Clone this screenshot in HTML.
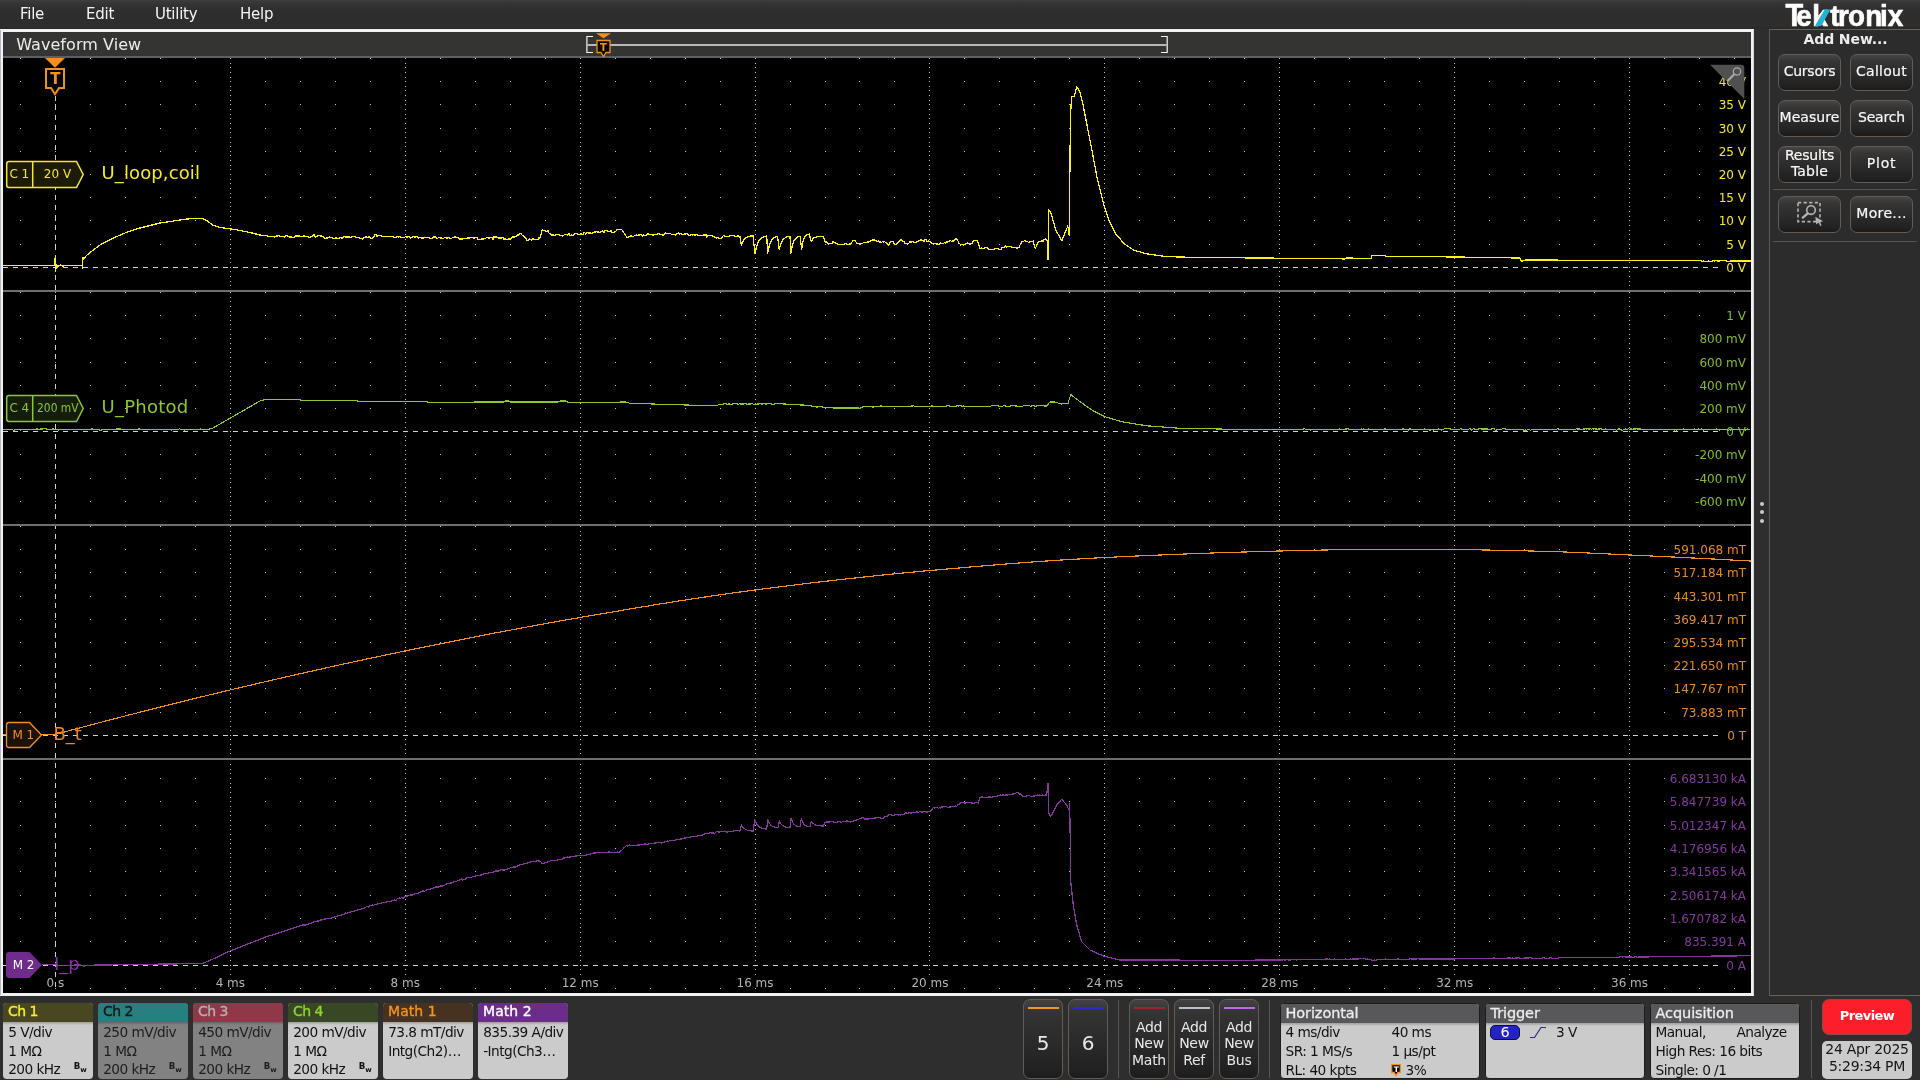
<!DOCTYPE html><html lang="en"><head><meta charset="utf-8"><title>Tektronix Waveform View</title>
<style>
*{box-sizing:border-box;margin:0;padding:0}
html,body{width:1920px;height:1080px;overflow:hidden;background:#2e2e2e}
body{position:relative;font-family:"DejaVu Sans", "Liberation Sans", sans-serif;color:#f2f2f2;font-size:14px}
.abs{position:absolute}
#root{position:absolute;left:0;top:0;width:1920px;height:1080px;will-change:transform}
.menu span{position:absolute;top:4px;font-size:15px;line-height:20px;letter-spacing:-.25px;color:#f4f4f4;white-space:nowrap}
#topbar{left:0;top:0;width:1920px;height:29px;background:linear-gradient(#3e3e3e,#343434 4px,#2e2e2e 11px,#2d2d2d 27px,#272727)}
#win{left:0;top:29px;width:1754px;height:967px;background:#000;border:3px solid #f1f1f1;border-left-color:#f4f4f4}
#wintitle{left:3px;top:32px;width:1748px;height:24px;background:#343433}
#wintitle .t{position:absolute;left:13.2px;top:1.5px;font-size:16px;line-height:22px;letter-spacing:.06px;color:#ececec;white-space:nowrap}
#winline{left:3px;top:56px;width:1748px;height:2px;background:#5c6064}
.sdiv{left:3px;width:1748px;height:2px;background:#6f6f6f}
#plot{left:0;top:0}
#plot text{font-family:"DejaVu Sans", "Liberation Sans", sans-serif;font-size:12px}
/* right panel */
#rp{left:1769px;top:29px;width:160px;height:967px;border:1px solid #6b615b;border-left-color:#5e5d5e;background:#2c2c2c}
#rp h3{position:absolute;left:0;top:-.2px;width:151px;text-align:center;font-size:14px;line-height:18px;font-weight:bold;letter-spacing:-.1px;color:#ececec;white-space:nowrap}
.btn{position:absolute;width:63px;height:36.5px;border:1px solid #655b55;border-radius:7px;
 background:linear-gradient(#454545 0%,#353535 18%,#2b2b2b 55%,#222 86%,#1b1b1b 100%);
 color:#f8f8f8;font-size:14px;-webkit-text-stroke:.2px #f8f8f8;text-align:center;line-height:32.6px;white-space:nowrap}
.btn.two{line-height:15.8px;padding-top:.6px}
.hr{position:absolute;height:1px;background:#5b534e}
/* bottom bar */
.badge{position:absolute;top:1003px;width:90px;height:76px;border-radius:4px;overflow:hidden;background:#cbcbcb;color:#111}
.badge.off{background:#828282;color:#1d1d1d}
.badge .h{height:19px;padding-left:5px;font-size:14px;-webkit-text-stroke:.35px currentColor;line-height:17.8px;letter-spacing:-.5px;white-space:nowrap}
.badge .b{padding:.9px 0 0 5.2px;font-size:13.7px;line-height:18.8px;white-space:nowrap;letter-spacing:-.55px;
 background:linear-gradient(rgba(0,0,0,.22),rgba(0,0,0,0) 3px)}
.badge .b div{height:18.8px}
.bw{position:absolute;right:6.2px;top:58px;font-size:8.6px;font-weight:bold;line-height:10px;letter-spacing:0}
.bw sub{font-size:7px;vertical-align:-2.7px;font-weight:bold}
.tall{position:absolute;top:999px;width:40px;height:80px;border:1px solid #655b55;border-radius:7px;
 background:linear-gradient(#424242 0%,#343434 15%,#2a2a2a 55%,#212121 90%,#1c1c1c 100%);color:#e8e8e8;text-align:center}
.tall i{position:absolute;left:3.5px;top:7.2px;width:31px;height:2px;display:block}
.tall .n{position:absolute;left:0;top:31px;width:38px;font-size:20px;line-height:24px}
.tall .w{position:absolute;left:-2px;top:19px;width:42px;font-size:14px;line-height:16.3px;letter-spacing:-.3px}
.vsep{position:absolute;top:1000px;width:1px;height:78px;background:#565656}
.info{position:absolute;top:1003px;height:76px;border-radius:4px;overflow:hidden;background:#cbcbcb;color:#111;border:1px solid #1c1c1c}
.info .h{height:19px;padding-left:4.5px;font-size:14.5px;-webkit-text-stroke:.3px currentColor;line-height:18.4px;letter-spacing:-.1px;background:#58585a;color:#ececec;white-space:nowrap}
.info .b{position:relative;height:57px;font-size:13.7px;letter-spacing:-.55px;line-height:18.8px;white-space:nowrap;background:linear-gradient(rgba(0,0,0,.22),rgba(0,0,0,0) 3px)}
.info .b span{position:absolute}
#prev{left:1822px;top:999px;width:90px;height:36px;border-radius:7px;background:#fc1e28;border:1px solid #8a4a4a;color:#fff;font-weight:bold;font-size:13px;line-height:32.8px;text-align:center;letter-spacing:-.55px}
#date{left:1822px;top:1040.5px;width:90px;height:38px;border-radius:5px;background:#cbcbcb;color:#151515;font-size:14px;line-height:17px;text-align:center;padding-top:.8px;white-space:nowrap;letter-spacing:-.3px}
</style></head><body><div id="root">
<div id="topbar" class="abs"></div>
<div class="menu"><span style="left:20px">File</span><span style="left:86px">Edit</span><span style="left:155px">Utility</span><span style="left:240px">Help</span></div>
<svg class="abs" style="left:1780px;top:0" width="130" height="29" viewBox="1780 0 130 29"><g transform="translate(1786 0) scale(.92 1)"><text y="25.8" fill="#fff" stroke="#fff" stroke-width=".65" style="font:bold 30.3px Liberation Sans,DejaVu Sans,sans-serif"><tspan x="-0.5" style="font-size:31.5px">T</tspan><tspan x="11.1 28.6 48.1 56.6 67.4 86.2 102.2 110.5">ektronix</tspan></text></g><path d="M1814.9 25.9H1821.3L1830.5 9.6H1824.7Z" fill="#22b4d8"/></svg>
<div id="win" class="abs"></div>
<div class="abs" style="left:0;top:30px;width:1px;height:965px;background:#b6b6be"></div>
<div class="abs" style="left:1753px;top:30px;width:1px;height:965px;background:#d4d4d8"></div>
<div id="wintitle" class="abs"><div class="t">Waveform View</div></div>
<div id="winline" class="abs"></div>
<svg class="abs" style="left:580px;top:32px" width="600" height="26" viewBox="580 32 600 26">
<path d="M587.5 45H1166.5" stroke="#b7b7b7" stroke-width="2" fill="none"/>
<path d="M593 36.5H586.9V52.5H593M1161 36.5H1167.2V52.5H1161" stroke="#f4f4f4" stroke-width="1.2" fill="none"/>
<path d="M596 33.2H611L603.5 38.3Z" fill="#f28f22"/>
<path d="M597 40.5H610V52.5H606L603.5 56.5L601 52.5H597Z" fill="#000" stroke="#f28f22" stroke-width="1.3"/>
<text x="603.5" y="50.6" fill="#f28f22" text-anchor="middle" style="font:bold 10px 'DejaVu Sans','Liberation Sans',sans-serif">T</text>
</svg>
<svg id="plot" class="abs" width="1754" height="996" viewBox="0 0 1754 996">
<g stroke="#c4c4c4" stroke-width="1" shape-rendering="crispEdges" fill="none">
<path d="M19.97 58.5H1751" stroke-dasharray="1 33.980"/>
<path d="M19.97 81.5H1751" stroke-dasharray="1 33.980"/>
<path d="M19.97 104.5H1751" stroke-dasharray="1 33.980"/>
<path d="M19.97 128.5H1751" stroke-dasharray="1 33.980"/>
<path d="M19.97 151.5H1751" stroke-dasharray="1 33.980"/>
<path d="M19.97 174.5H1751" stroke-dasharray="1 33.980"/>
<path d="M19.97 197.5H1751" stroke-dasharray="1 33.980"/>
<path d="M19.97 220.5H1751" stroke-dasharray="1 33.980"/>
<path d="M19.97 244.5H1751" stroke-dasharray="1 33.980"/>
<path d="M230.5 58.00V290" stroke-dasharray="1 3.640"/>
<path d="M405.5 58.00V290" stroke-dasharray="1 3.640"/>
<path d="M580.5 58.00V290" stroke-dasharray="1 3.640"/>
<path d="M755.5 58.00V290" stroke-dasharray="1 3.640"/>
<path d="M929.5 58.00V290" stroke-dasharray="1 3.640"/>
<path d="M1104.5 58.00V290" stroke-dasharray="1 3.640"/>
<path d="M1279.5 58.00V290" stroke-dasharray="1 3.640"/>
<path d="M1454.5 58.00V290" stroke-dasharray="1 3.640"/>
<path d="M1629.5 58.00V290" stroke-dasharray="1 3.640"/>
<path d="M19.97 292.5H1751" stroke-dasharray="1 33.980"/>
<path d="M19.97 315.5H1751" stroke-dasharray="1 33.980"/>
<path d="M19.97 338.5H1751" stroke-dasharray="1 33.980"/>
<path d="M19.97 362.5H1751" stroke-dasharray="1 33.980"/>
<path d="M19.97 385.5H1751" stroke-dasharray="1 33.980"/>
<path d="M19.97 408.5H1751" stroke-dasharray="1 33.980"/>
<path d="M19.97 454.5H1751" stroke-dasharray="1 33.980"/>
<path d="M19.97 478.5H1751" stroke-dasharray="1 33.980"/>
<path d="M19.97 501.5H1751" stroke-dasharray="1 33.980"/>
<path d="M230.5 292.00V524" stroke-dasharray="1 3.640"/>
<path d="M405.5 292.00V524" stroke-dasharray="1 3.640"/>
<path d="M580.5 292.00V524" stroke-dasharray="1 3.640"/>
<path d="M755.5 292.00V524" stroke-dasharray="1 3.640"/>
<path d="M929.5 292.00V524" stroke-dasharray="1 3.640"/>
<path d="M1104.5 292.00V524" stroke-dasharray="1 3.640"/>
<path d="M1279.5 292.00V524" stroke-dasharray="1 3.640"/>
<path d="M1454.5 292.00V524" stroke-dasharray="1 3.640"/>
<path d="M1629.5 292.00V524" stroke-dasharray="1 3.640"/>
<path d="M19.97 526.5H1751" stroke-dasharray="1 33.980"/>
<path d="M19.97 549.5H1751" stroke-dasharray="1 33.980"/>
<path d="M19.97 572.5H1751" stroke-dasharray="1 33.980"/>
<path d="M19.97 596.5H1751" stroke-dasharray="1 33.980"/>
<path d="M19.97 619.5H1751" stroke-dasharray="1 33.980"/>
<path d="M19.97 642.5H1751" stroke-dasharray="1 33.980"/>
<path d="M19.97 665.5H1751" stroke-dasharray="1 33.980"/>
<path d="M19.97 688.5H1751" stroke-dasharray="1 33.980"/>
<path d="M19.97 712.5H1751" stroke-dasharray="1 33.980"/>
<path d="M230.5 526.00V758" stroke-dasharray="1 3.640"/>
<path d="M405.5 526.00V758" stroke-dasharray="1 3.640"/>
<path d="M580.5 526.00V758" stroke-dasharray="1 3.640"/>
<path d="M755.5 526.00V758" stroke-dasharray="1 3.640"/>
<path d="M929.5 526.00V758" stroke-dasharray="1 3.640"/>
<path d="M1104.5 526.00V758" stroke-dasharray="1 3.640"/>
<path d="M1279.5 526.00V758" stroke-dasharray="1 3.640"/>
<path d="M1454.5 526.00V758" stroke-dasharray="1 3.640"/>
<path d="M1629.5 526.00V758" stroke-dasharray="1 3.640"/>
<path d="M19.97 778.5H1751" stroke-dasharray="1 33.980"/>
<path d="M19.97 801.5H1751" stroke-dasharray="1 33.980"/>
<path d="M19.97 825.5H1751" stroke-dasharray="1 33.980"/>
<path d="M19.97 848.5H1751" stroke-dasharray="1 33.980"/>
<path d="M19.97 871.5H1751" stroke-dasharray="1 33.980"/>
<path d="M19.97 895.5H1751" stroke-dasharray="1 33.980"/>
<path d="M19.97 918.5H1751" stroke-dasharray="1 33.980"/>
<path d="M19.97 941.5H1751" stroke-dasharray="1 33.980"/>
<path d="M19.97 988.5H1751" stroke-dasharray="1 33.980"/>
<path d="M230.5 764.00V993" stroke-dasharray="1 3.667"/>
<path d="M405.5 764.00V993" stroke-dasharray="1 3.667"/>
<path d="M580.5 764.00V993" stroke-dasharray="1 3.667"/>
<path d="M755.5 764.00V993" stroke-dasharray="1 3.667"/>
<path d="M929.5 764.00V993" stroke-dasharray="1 3.667"/>
<path d="M1104.5 764.00V993" stroke-dasharray="1 3.667"/>
<path d="M1279.5 764.00V993" stroke-dasharray="1 3.667"/>
<path d="M1454.5 764.00V993" stroke-dasharray="1 3.667"/>
<path d="M1629.5 764.00V993" stroke-dasharray="1 3.667"/>
</g>
<g stroke="#d2d2d2" stroke-width="1" shape-rendering="crispEdges" stroke-dasharray="5 5">
<path d="M3 267.5H1718"/>
<path d="M3 431.5H1718"/>
<path d="M3 735.5H1718"/>
<path d="M3 965.5H1718"/>
<path d="M55.5 95.5V988" stroke-dasharray="5 4.96"/>
</g>
<rect x="1715.7" y="73.7" width="33.3" height="16" fill="#000"/>
<text x="1746" y="86.1" fill="#f6ea2c" text-anchor="end">40 V</text>
<rect x="1715.7" y="96.9" width="33.3" height="16" fill="#000"/>
<text x="1746" y="109.3" fill="#f6ea2c" text-anchor="end">35 V</text>
<rect x="1715.7" y="120.1" width="33.3" height="16" fill="#000"/>
<text x="1746" y="132.5" fill="#f6ea2c" text-anchor="end">30 V</text>
<rect x="1715.7" y="143.3" width="33.3" height="16" fill="#000"/>
<text x="1746" y="155.7" fill="#f6ea2c" text-anchor="end">25 V</text>
<rect x="1715.7" y="166.5" width="33.3" height="16" fill="#000"/>
<text x="1746" y="178.9" fill="#f6ea2c" text-anchor="end">20 V</text>
<rect x="1715.7" y="189.7" width="33.3" height="16" fill="#000"/>
<text x="1746" y="202.1" fill="#f6ea2c" text-anchor="end">15 V</text>
<rect x="1715.7" y="212.9" width="33.3" height="16" fill="#000"/>
<text x="1746" y="225.3" fill="#f6ea2c" text-anchor="end">10 V</text>
<rect x="1723.3" y="236.1" width="25.7" height="16" fill="#000"/>
<text x="1746" y="248.5" fill="#f6ea2c" text-anchor="end">5 V</text>
<rect x="1723.3" y="259.3" width="25.7" height="16" fill="#000"/>
<text x="1746" y="271.7" fill="#f6ea2c" text-anchor="end">0 V</text>
<rect x="1723.3" y="307.7" width="25.7" height="16" fill="#000"/>
<text x="1746" y="320.1" fill="#86bc2c" text-anchor="end">1 V</text>
<rect x="1696.4" y="330.9" width="52.6" height="16" fill="#000"/>
<text x="1746" y="343.3" fill="#86bc2c" text-anchor="end">800 mV</text>
<rect x="1696.4" y="354.1" width="52.6" height="16" fill="#000"/>
<text x="1746" y="366.5" fill="#86bc2c" text-anchor="end">600 mV</text>
<rect x="1696.4" y="377.3" width="52.6" height="16" fill="#000"/>
<text x="1746" y="389.7" fill="#86bc2c" text-anchor="end">400 mV</text>
<rect x="1696.4" y="400.5" width="52.6" height="16" fill="#000"/>
<text x="1746" y="412.9" fill="#86bc2c" text-anchor="end">200 mV</text>
<rect x="1723.3" y="423.7" width="25.7" height="16" fill="#000"/>
<text x="1746" y="436.1" fill="#86bc2c" text-anchor="end">0 V</text>
<rect x="1692.1" y="446.9" width="56.9" height="16" fill="#000"/>
<text x="1746" y="459.3" fill="#86bc2c" text-anchor="end">-200 mV</text>
<rect x="1692.1" y="470.1" width="56.9" height="16" fill="#000"/>
<text x="1746" y="482.5" fill="#86bc2c" text-anchor="end">-400 mV</text>
<rect x="1692.1" y="493.3" width="56.9" height="16" fill="#000"/>
<text x="1746" y="505.7" fill="#86bc2c" text-anchor="end">-600 mV</text>
<rect x="1670.6" y="541.7" width="78.4" height="16" fill="#000"/>
<text x="1746" y="554.1" fill="#e58a26" text-anchor="end">591.068 mT</text>
<rect x="1670.6" y="564.9" width="78.4" height="16" fill="#000"/>
<text x="1746" y="577.3" fill="#e58a26" text-anchor="end">517.184 mT</text>
<rect x="1670.6" y="588.1" width="78.4" height="16" fill="#000"/>
<text x="1746" y="600.5" fill="#e58a26" text-anchor="end">443.301 mT</text>
<rect x="1670.6" y="611.3" width="78.4" height="16" fill="#000"/>
<text x="1746" y="623.7" fill="#e58a26" text-anchor="end">369.417 mT</text>
<rect x="1670.6" y="634.5" width="78.4" height="16" fill="#000"/>
<text x="1746" y="646.9" fill="#e58a26" text-anchor="end">295.534 mT</text>
<rect x="1670.6" y="657.7" width="78.4" height="16" fill="#000"/>
<text x="1746" y="670.1" fill="#e58a26" text-anchor="end">221.650 mT</text>
<rect x="1670.6" y="680.9" width="78.4" height="16" fill="#000"/>
<text x="1746" y="693.3" fill="#e58a26" text-anchor="end">147.767 mT</text>
<rect x="1678.2" y="704.1" width="70.8" height="16" fill="#000"/>
<text x="1746" y="716.5" fill="#e58a26" text-anchor="end">73.883 mT</text>
<rect x="1724.2" y="727.3" width="24.8" height="16" fill="#000"/>
<text x="1746" y="739.7" fill="#e58a26" text-anchor="end">0 T</text>
<rect x="1666.8" y="770.5" width="82.2" height="16" fill="#000"/>
<text x="1746" y="782.9" fill="#85389f" text-anchor="end">6.683130 kA</text>
<rect x="1666.8" y="793.8" width="82.2" height="16" fill="#000"/>
<text x="1746" y="806.2" fill="#85389f" text-anchor="end">5.847739 kA</text>
<rect x="1666.8" y="817.2" width="82.2" height="16" fill="#000"/>
<text x="1746" y="829.6" fill="#85389f" text-anchor="end">5.012347 kA</text>
<rect x="1666.8" y="840.5" width="82.2" height="16" fill="#000"/>
<text x="1746" y="852.9" fill="#85389f" text-anchor="end">4.176956 kA</text>
<rect x="1666.8" y="863.8" width="82.2" height="16" fill="#000"/>
<text x="1746" y="876.2" fill="#85389f" text-anchor="end">3.341565 kA</text>
<rect x="1666.8" y="887.2" width="82.2" height="16" fill="#000"/>
<text x="1746" y="899.6" fill="#85389f" text-anchor="end">2.506174 kA</text>
<rect x="1666.8" y="910.5" width="82.2" height="16" fill="#000"/>
<text x="1746" y="922.9" fill="#85389f" text-anchor="end">1.670782 kA</text>
<rect x="1681.4" y="933.8" width="67.6" height="16" fill="#000"/>
<text x="1746" y="946.2" fill="#85389f" text-anchor="end">835.391 A</text>
<rect x="1723.3" y="957.2" width="25.7" height="16" fill="#000"/>
<text x="1746" y="969.6" fill="#85389f" text-anchor="end">0 A</text>
<text x="55.45" y="987" fill="#b4b4b4" text-anchor="middle">0 s</text>
<rect x="214.0" y="976" width="32.8" height="12" fill="#000"/>
<text x="230.35000000000002" y="987" fill="#b4b4b4" text-anchor="middle">4 ms</text>
<rect x="388.9" y="976" width="32.8" height="12" fill="#000"/>
<text x="405.25" y="987" fill="#b4b4b4" text-anchor="middle">8 ms</text>
<rect x="560.0" y="976" width="40.4" height="12" fill="#000"/>
<text x="580.1500000000001" y="987" fill="#b4b4b4" text-anchor="middle">12 ms</text>
<rect x="734.9" y="976" width="40.4" height="12" fill="#000"/>
<text x="755.0500000000001" y="987" fill="#b4b4b4" text-anchor="middle">16 ms</text>
<rect x="909.8" y="976" width="40.4" height="12" fill="#000"/>
<text x="929.95" y="987" fill="#b4b4b4" text-anchor="middle">20 ms</text>
<rect x="1084.7" y="976" width="40.4" height="12" fill="#000"/>
<text x="1104.8500000000001" y="987" fill="#b4b4b4" text-anchor="middle">24 ms</text>
<rect x="1259.5" y="976" width="40.4" height="12" fill="#000"/>
<text x="1279.75" y="987" fill="#b4b4b4" text-anchor="middle">28 ms</text>
<rect x="1434.5" y="976" width="40.4" height="12" fill="#000"/>
<text x="1454.65" y="987" fill="#b4b4b4" text-anchor="middle">32 ms</text>
<rect x="1609.4" y="976" width="40.4" height="12" fill="#000"/>
<text x="1629.5500000000002" y="987" fill="#b4b4b4" text-anchor="middle">36 ms</text>
<polyline points="3,429.5 4,429.5 5,429.1 6,429.5 7,429.7 8,429.3 9,429.3 10,429.9 11,429.6 12,429.6 13,430.1 14,430.1 15,429.9 16,428.9 17,429.7 18,429.3 19,429.7 20,429.7 21,430.1 22,429.6 23,429.9 24.1,429.9 25.1,429.1 26.1,429.1 27.1,429.1 28.1,429.3 29.1,429.6 30.1,429.3 31.1,429.1 32.1,429.9 33.1,429.4 34.1,429.9 35.1,429.1 36.1,429.1 37.1,428.9 38.1,429.4 39.1,429.1 40.1,429.1 41.1,428.9 42.1,429.1 43.1,428.9 44.1,428.9 45.1,428.9 46.1,428.9 47.1,429.1 48.1,429.1 49.1,429.1 50.1,429.1 51.1,429.1 52.1,429.1 53.1,428.9 54.1,429.7 55.1,429.7 56.1,429.4 57.1,429.4 58.1,430.1 59.1,429.5 60.1,429.5 61.1,429.5 62.1,429.5 63.1,429.7 64.1,429.5 65.2,429.5 66.2,429.3 67.2,429.5 68.2,429.5 69.2,429.5 70.2,429.7 71.2,429.3 72.2,429.7 73.2,429.4 74.2,429.9 75.2,429.9 76.2,429.7 77.2,429.7 78.2,429.7 79.2,429.7 80.2,429.7 81.2,429.5 82.2,429.3 83.2,429.6 84.2,429.7 85.2,429.4 86.2,429.1 87.2,429.9 88.2,429.1 89.2,429.1 90.2,429.4 91.2,429.1 92.2,428.9 93.2,429.1 94.2,429.1 95.2,429.4 96.2,429.4 97.2,429.9 98.2,429.3 99.2,429.9 100.2,430.1 101.2,430.1 102.2,429.9 103.2,429.5 104.2,429.5 105.2,429.3 106.3,429.4 107.3,429.9 108.3,429.1 109.3,429.4 110.3,429.4 111.3,429.5 112.3,429.7 113.3,429.5 114.3,429.1 115.3,429.3 116.3,428.9 117.3,429.1 118.3,428.9 119.3,429.1 120.3,428.9 121.3,429.7 122.3,429.9 123.3,429.7 124.3,429.7 125.3,429.7 126.3,429.5 127.3,429.4 128.3,429.4 129.3,429.7 130.3,429.3 131.3,429.3 132.3,429.3 133.3,429.3 134.3,429.1 135.3,429.3 136.3,429.1 137.3,429.1 138.3,429.1 139.3,428.9 140.3,429.1 141.3,429.1 142.3,429.1 143.3,429.7 144.3,429.7 145.3,429.4 146.4,429.7 147.4,429.4 148.4,429.7 149.4,429.3 150.4,429.5 151.4,429.6 152.4,429.7 153.4,429.5 154.4,429.5 155.4,429.5 156.4,429.7 157.4,429.5 158.4,429.5 159.4,429.5 160.4,429.5 161.4,429.4 162.4,429.7 163.4,429.7 164.4,429.3 165.4,429.3 166.4,429.3 167.4,429.5 168.4,429.3 169.4,429.5 170.4,429.6 171.4,430.1 172.4,429.3 173.4,429.7 174.4,429.3 175.4,429.5 176.4,429.3 177.4,429.6 178.4,429.3 179.4,428.9 180.4,429.1 181.4,429.1 182.4,429.7 183.4,429.7 184.4,430.1 185.4,429.6 186.4,429.9 187.5,429.9 188.5,429.5 189.5,429.9 190.5,429.7 191.5,429.9 192.5,429.6 193.5,429.9 194.5,429.6 195.5,429.9 196.5,429.9 197.5,429.9 198.5,429.6 199.5,429.1 200.5,428.9 201.5,429.4 202.5,429.1 203.5,429.3 204.5,429.7 205.5,429.5 206.5,429.5 207.5,429.5 208.6,429.2 209.8,429 210.9,428.8 212,428.5 213,427.9 214,427.4 215,426.8 216,426.2 217,425.6 218,425.1 219,424.5 220,423.9 221,423.3 222,422.8 223,422.2 224,421.6 225,421.1 226,420.5 227,419.9 228,419.3 229,418.8 230,418.2 231,417.6 232,417 233,416.5 234,415.9 235,415.3 236,414.8 237,414.2 238,413.6 239,413 240,412.5 241,411.9 242,411.3 243,410.7 244,410.2 245,409.6 246,409 247,408.4 248,407.9 249,407.3 250,406.7 251,406.2 252,405.6 253,405 254,404.4 255,403.9 256,403.3 257,402.7 258,402.1 259,401.6 260,401 261,400.7 262,400.4 263,400.1 264,399.8 265,399.5 266,399.5 267,399.5 268,399.5 269,399.5 270,399.5 271,399.5 272,399.5 273,399.5 274,399.5 275,399.5 276,399.5 277,399.5 278,399.5 279,399.5 280,399.5 281,399.5 282,399.5 283,399.5 284,399.5 285,399.5 286,399.5 287,399.5 288,399.5 289,399.5 290,399.5 291,399.5 292,399.5 293,399.5 294,399.5 295,399.5 296,399.5 297,399.5 298,399.5 299,399.5 300,399.5 300.5,400.5 301.5,400.5 302.5,400.5 303.5,400.5 304.5,400.5 305.5,400.5 306.5,400.5 307.5,400.5 308.5,400.5 309.5,400.5 310.5,400.5 311.5,400.5 312.5,400.5 313.5,400.5 314.5,400.5 315.5,400.5 316.5,400.5 317.5,400.5 318.5,400.5 319.5,400.5 320.5,400.5 321.5,400.5 322.5,400.5 323.5,400.5 324.5,400.5 325.5,400.5 326.5,400.5 327.5,400.5 328.5,400.5 329.5,400.5 330.5,400.5 331.5,400.5 332.5,400.5 333.5,400.5 334.5,400.5 335.5,400.5 336.5,400.5 337.5,400.5 338.5,400.5 339.5,400.5 340.5,400.5 341.5,400.5 342.5,400.5 343.5,400.5 344.5,400.5 345.5,400.5 346.5,400.5 347.5,400.5 348.5,400.5 349.5,400.5 350.5,400.5 351.5,400.5 352.5,400.5 353.5,400.5 354.5,400.5 355.5,400.5 356.5,400.5 357.5,400.5 358,401.5 359,401.5 360,401.5 361,401.5 362,401.5 363,401.5 364,401.5 364.9,401.5 365.9,401.5 366.9,401.5 367.9,401.5 368.9,401.5 369.9,401.5 370.9,401.5 371.9,401.5 372.9,401.5 373.9,401.5 374.9,401.5 375.9,401.5 376.9,401.5 377.9,401.5 378.9,401.5 379.8,401.5 380.8,401.5 381.8,401.5 382.8,401.5 383.8,401.5 384.8,401.5 385.8,401.5 386.8,401.5 387.8,401.5 388.8,401.5 389.8,401.5 390.8,401.5 391.8,401.5 392.8,401.5 393.7,401.5 394.7,401.5 395.7,401.5 396.7,401.5 397.7,401.5 398.7,401.5 399.7,401.5 400.7,401.5 401.7,401.5 402.7,401.5 403.7,401.5 404.7,401.5 405.7,401.5 406.6,401.5 407.6,401.5 408.6,401.5 409.6,401.5 410.6,401.5 411.6,401.5 412.6,401.5 413.6,401.5 414.6,401.5 415.6,401.5 416.6,401.5 417.6,401.5 418.6,401.5 419.6,401.5 420.6,401.5 421.5,401.5 422.5,401.5 423.5,401.5 424.5,401.5 425.5,401.5 426.5,401.5 427.5,401.5 428,402.5 429,402.5 430,402.5 431,402.5 432,402.5 433,402.5 434,402.4 435,402.4 436,402.4 437,402.4 438,402.4 439,402.4 440,402.4 441,402.4 442,402.4 443,402.4 444,402.3 445,402.3 446,402.3 447,402.3 448,402.3 449,402.3 450,402.3 451,402.3 452,402.3 453,402.3 454,402.2 455,402.2 456,402.2 457,402.2 458,402.2 459,402.2 460,402.2 461,402.2 462,402.2 463,402.2 464,402.2 465,402.1 466,402.1 467,402.1 468,402.1 469,402.1 470,402.1 471,402.1 472,402.1 473,402.1 474,402.1 475,402 476,402 477,402 478,402 479,402 480,402 481,402 482,402 483,402 484,402 485,402 486,402 487,402 488,402 489,402 490,402 491,402 492,402 493,402 494,402 495,402 496,402 497,402 498,402 499,402 500,402 501,402 502,402 503,402 504,402 505,401 506,401 507,401 508,401 509,401 510,402 511,402 512,402 513,402 514,402 515,402 516,402 517,402 518,402 519,402 520,402 521,402 522,402 523,402 524,402 525,402 526,402 527,402 528,402 529,402 530,402 531,402 532,402 533,402 534,402 535,402 536,402 537,402 538,402 539,402 540,402 541,402 542,402 543,402 544,402 545,402 546,402 547,402 548,402 549,402 550,402 551,402 552,402 553,402 554,402 555,402 556,402 557,402 558,402 559,401.5 560,401 561,401 562,401 563,401 564,401 565,401 566,401 567,401.8 568,402.5 569,402.5 570,402.5 571,402.5 572,402.5 573,402.5 574,402.4 575,402.4 576,402.4 577,402.4 578,402.4 579,402.4 580,402.4 581,402.4 582,402.4 583,402.4 584,402.4 585,402.4 586,402.3 587,402.3 588,402.3 589,402.3 590,402.3 591,402.3 592,402.3 593,402.3 594,402.3 595,402.3 596,402.3 597,402.2 598,402.2 599,402.2 600,402.2 601,402.2 602,402.2 603,402.2 604,402.2 605,402.2 606,402.2 607,402.2 608,402.2 609,402.1 610,402.1 611,402.1 612,402.1 613,402.1 614,402.1 615,402.1 616,402.1 617,402.1 618,402.1 619,402.1 620,402.1 621,402 622,402 623,402 624,402 625,402 626,402 627,402.3 628,402.6 629,403 630,403.3 631,403.3 632,403.4 633,403.4 634,403.4 635,403.5 636,403.5 637,403.5 638,403.5 639,403.6 640,403.6 641,403.6 642,403.7 643,403.7 644,403.7 645,403.8 646,403.8 647,403.8 648,403.8 649,403.9 650,403.9 651,403.9 652,404 653,404 654,404 655,404.1 656,404.1 657,404.1 658,404.1 659,404.2 660,404.2 661,404.2 662,404.3 663,404.3 664,404.3 665,404.4 666,404.4 667,404.4 668,404.4 669,404.5 670,404.5 671,404.5 672,404.6 673,404.6 674,404.6 675,404.7 676,404.7 677,404.7 678,404.7 679,404.8 680,404.8 681,404.8 682,404.9 683,404.9 684,404.9 685,405 686,405 687,405 688,405 689,405.1 690,405.1 691,405.1 692,405.2 693,405.2 694,405.2 695,405.3 696,405.3 697,405.3 698,405.3 699,405.4 700,405.4 701,405.4 702,405.5 703,405.5 704,405.5 705,405.6 706,405.6 707,405.6 708,405.6 709,405.7 710,405.7 711,405.7 712,405.8 713,405.8 714,405.6 715,405 716,405.7 717,405.5 718,405 719,404.4 720,404.2 721,404.1 722,404.2 723,404.2 724,403.6 725,403.9 726,403.5 727,404.2 728,404.2 729,403.8 730,404.1 731,404.4 732,404.4 733,403.3 734,403.6 735,403.9 736,403.6 737,403.9 738,404.1 739,404.1 740,403.5 741,404.2 742,403.9 743,404 744,403.9 745,403.9 746,403.6 747,404.8 748,404.8 749,403.8 750,404.2 751,403.4 752,403.4 753,403.9 754,404.6 755,403.9 756,404.6 757,404.2 758,403.7 759,404.1 760,403.4 761,403.8 762,404.1 763,403.8 764,403.8 765,403.8 766,404.1 767,404 768,403.7 769,403.8 770,403.8 771,403.8 772,404.1 773,404.1 774,404.1 775,403.8 776,403.6 777,404 778,403.6 779,404 780,403.6 781,403.3 782,403.6 783,403.6 784,404.2 785,403.9 786,404.3 787,404.7 788,404.7 789,404.3 790,404.8 791,404.5 792,404.6 793,404.3 794,404.4 795,404.5 796,404.9 797,404.7 798,404.4 799,404.8 800,404.9 801,405 802,405.1 803,404.8 804,405.3 805,405.6 806,405.7 807,405.5 808,406 809,405.7 810,405.8 811,405.9 812,406.4 813,406.1 814,406.2 815,406.8 816,406.5 817,407.3 818,406.6 819,407 820,406.7 821,406.8 822,406.9 823,407.4 824,407 825,407.2 826,407.3 827,407 828,407.5 829,407.9 830,407.6 831,407.7 832,407.8 833,407.9 834,408 835,408 836,408 837,408 838,408 839,408 840,408 841,408 842,408 843,408 844,408 845,408 846,408 847,408 848,408 849,408 850,408 851,408 852,408 853,408 854,408 855,408 856,408 857,408 858,408 859,408 860,408.2 861,407.7 862,407.2 863,406.4 864,406.9 865,406.4 866,406.4 867,406.7 868,406.9 869,406.5 870,406.7 871,406.1 872,406.9 873,407.1 874,406.8 875,406.8 876,406.8 877,406.4 878,406.1 879,406.1 880,406.3 881,405.9 882,406.3 883,406.8 884,406.8 885,406.5 886,407 887,406.3 888,406 889,406.7 890,406.2 891,406.7 892,406 893,406.6 893.9,406.4 894.9,406.4 895.9,406.4 896.9,406.2 897.9,406.6 898.9,406.4 899.9,406.4 900.9,406 901.9,406.4 902.9,406.4 903.9,406.1 904.9,406.4 905.9,406.1 906.9,406.4 907.9,406.4 908.9,406.4 909.9,406.4 910.9,406 911.9,406 912.9,406 913.9,405.8 914.9,406.5 915.9,406.5 916.9,406.5 917.9,406.4 918.9,406.3 919.9,406.6 920.9,406.6 921.9,406.3 922.9,406.3 923.9,406.3 924.9,406.3 925.9,406.3 926.9,406.3 927.9,406.2 928.9,406.3 929.9,406.9 930.9,406 931.9,406 932.9,406 933.9,406.4 934.9,406.5 935.9,406.3 936.9,406.1 937.9,406.1 938.9,406.3 939.9,406.3 940.9,406.3 941.9,406.6 942.9,406.4 943.9,406.6 944.9,406.3 945.9,406 946.9,405.9 947.9,405.9 948.9,405.7 949.9,406.2 950.9,406.1 951.9,406.4 952.9,406.6 953.9,406.6 954.9,406.8 955.8,406.5 956.8,405.6 957.8,405.9 958.8,406.1 959.8,405.6 960.8,405.6 961.8,406.2 962.8,406.2 963.8,406 964.8,406.2 965.8,406.5 966.8,406.2 967.8,406.2 968.8,406.2 969.8,406.2 970.8,406.2 971.8,406.2 972.8,406.4 973.8,406.2 974.8,406.2 975.8,406.8 976.8,406.4 977.8,406.4 978.8,406.4 979.8,406.4 980.8,406.4 981.8,406.5 982.8,406.5 983.8,406.5 984.8,406.3 985.8,406.5 986.8,406.5 987.8,406.5 988.8,406.5 989.8,406.5 990.8,406 991.8,405.8 992.8,405.8 993.8,405.8 994.8,405.8 995.8,405.5 996.8,405.5 997.8,405.8 998.8,406.1 999.8,406.5 1000.8,406.2 1001.8,406.1 1002.8,406.1 1003.8,405.5 1004.8,405.9 1005.8,406.1 1006.8,406.4 1007.8,406.5 1008.8,406.5 1009.8,406.3 1010.8,405.7 1011.8,405.7 1012.8,405.5 1013.8,405.5 1014.8,405.7 1015.8,406.2 1016.7,405.9 1017.7,406.4 1018.7,406.4 1019.7,406.4 1020.7,406.1 1021.7,406.1 1022.7,406.1 1023.7,405.5 1024.7,405.7 1025.7,405.7 1026.7,405.7 1027.7,405.7 1028.7,405.5 1029.7,405.9 1030.7,406.4 1031.7,405.7 1032.7,405.7 1033.7,405.4 1034.7,406.5 1035.7,406.2 1036.7,405.9 1037.7,405.7 1038.7,405.7 1039.7,405.7 1040.7,405.4 1041.7,405.9 1042.7,405.9 1043.7,405.9 1044.7,406 1045.7,406 1046.7,406 1047.8,404.7 1048.9,403.3 1050,402 1051,402 1052,402 1053,402 1054,402 1055,402 1056,402.3 1057,402.7 1058,403 1059,403.3 1060,403.7 1061,404 1062,403.9 1063,403.8 1064,403.7 1065,403.6 1066,403.5 1067,403.4 1068,403.3 1068.9,400.4 1069.9,397.5 1070.8,394.6 1071.8,395.4 1072.8,396.2 1073.9,397 1074.9,397.8 1075.9,398.5 1076.9,399.3 1078,400.1 1079,400.9 1080,401.7 1081,402.4 1082.1,403.1 1083.1,403.9 1084.2,404.6 1085.2,405.3 1086.2,406 1087.3,406.8 1088.3,407.5 1089.4,408.2 1090.4,408.9 1091.5,409.7 1092.5,410.4 1093.5,410.9 1094.6,411.4 1095.6,412 1096.7,412.5 1097.7,413 1098.8,413.5 1099.8,414.1 1100.8,414.6 1101.9,415.1 1102.9,415.6 1104,416.2 1105,416.7 1106,417 1107,417.3 1107.9,417.6 1108.9,417.9 1109.9,418.2 1110.9,418.5 1111.9,418.8 1112.9,419.1 1113.8,419.3 1114.8,419.6 1115.8,419.9 1116.8,420.2 1117.8,420.5 1118.8,420.8 1119.7,421.1 1120.7,421.4 1121.7,421.7 1122.7,421.9 1123.7,422 1124.7,422.2 1125.7,422.4 1126.7,422.5 1127.7,422.7 1128.7,422.8 1129.7,423 1130.7,423.2 1131.7,423.3 1132.7,423.5 1133.7,423.7 1134.7,423.8 1135.7,424 1136.7,424.2 1137.7,424.3 1138.7,424.5 1139.7,424.7 1140.7,424.8 1141.7,425 1142.7,425.1 1143.7,425.3 1144.7,425.5 1145.7,425.6 1146.7,425.8 1147.7,425.9 1148.7,426 1149.7,426 1150.7,426.1 1151.7,426.2 1152.8,426.3 1153.8,426.3 1154.8,426.4 1155.8,426.5 1156.8,426.6 1157.8,426.6 1158.8,426.7 1159.8,426.8 1160.8,426.9 1161.8,426.9 1162.8,427 1163.9,427.1 1164.9,427.2 1165.9,427.2 1166.9,427.3 1167.9,427.4 1168.9,427.5 1169.9,427.5 1170.9,427.6 1171.9,427.7 1172.9,427.8 1173.9,427.8 1175,427.9 1176,428 1177,428.1 1178,428.1 1179,428.2 1180,428.3 1181,428.3 1182,428.3 1183,428.4 1184,428.4 1185,428.4 1186,428.4 1187,428.4 1188,428.4 1189,428.5 1190,428.5 1191,428.5 1192,428.5 1193,428.5 1194,428.6 1195,428.6 1196,428.6 1197,428.6 1198,428.6 1199,428.6 1200,428.7 1201,428.7 1202,428.7 1203,428.7 1204,428.7 1205,428.8 1206,428.8 1207,428.8 1208,428.8 1209,428.8 1210,428.8 1211,428.9 1212,428.9 1213,428.9 1214,428.9 1215,428.9 1216,428.9 1217,429 1218,429 1219,429 1220,429 1221,429 1222,429.1 1223,429.1 1224,429.1 1225,429.1 1226,429.1 1227,429.1 1228,429.2 1229,429.2 1230,429.2 1231,429.2 1232,429.2 1233,429.2 1234,429.2 1235,429.2 1236,429.2 1237,429.2 1238,429.2 1239,429.2 1240,429.2 1241,429.2 1242,429.2 1243,429.2 1244,429.2 1245,429.2 1246,429.2 1247,429.2 1248,429.2 1249,429.2 1250,429.2 1251,429.2 1252,429.2 1253,429.2 1254,429.2 1255,429.2 1256,429.3 1257,429.3 1258,429.3 1259,429.3 1260,429.3 1261,429.3 1262,429.3 1263,429.3 1264,429.3 1265,429.3 1266,429.3 1267,429.3 1268,429.3 1269,429.3 1270,429.3 1271,429.3 1272,429.3 1273,429.3 1274,429.3 1275,429.3 1276,429.3 1277,429.3 1278,429.3 1279,429.3 1280,429.3 1281,429.3 1282,429.3 1283,429.3 1284,429.3 1285,429.3 1286,429.6 1287,429 1288,429.3 1289,429.3 1290,429.3 1291,429.3 1292,429.3 1293,429.6 1294,429 1295,429.3 1296,429.3 1297,429.3 1298,429.3 1299,429.3 1300,429.3 1301,429.3 1302,429.1 1303,429.1 1304,428.8 1305,429 1306,429.8 1307,429.8 1308,429.8 1309,429.4 1310,430.1 1311,429.8 1312,429.8 1313,429.9 1314,429.2 1315,429.9 1316,429.8 1317,429.8 1318,429.5 1319,429.2 1320,429.2 1321,429.2 1322,429.5 1323,429.2 1324,429.5 1325,429.2 1326,429.5 1327,429.5 1328.1,429.8 1329.1,429.5 1330.1,429.5 1331.1,429.9 1332.1,429.5 1333.1,429.5 1334.1,429.5 1335.1,429.2 1336.1,429.8 1337.1,429.1 1338.1,429.5 1339.1,428.9 1340.1,429.3 1341.1,429.3 1342.1,429.6 1343.1,429.6 1344.1,429.3 1345.1,429 1346.1,429.1 1347.1,428.8 1348.1,428.8 1349.1,429.9 1350.1,429.6 1351.1,429.6 1352.1,429.9 1353.1,429.6 1354.1,429.1 1355.1,429.4 1356.1,429.1 1357.1,429.3 1358.1,429.3 1359.1,429.3 1360.1,429.6 1361.1,428.9 1362.1,429.2 1363.1,429.1 1364.1,429 1365.1,429.3 1366.1,429.7 1367.1,429.3 1368.1,429 1369.1,429 1370.1,429.3 1371.1,429 1372.1,429.3 1373.1,429.3 1374.1,429.3 1375.1,429.3 1376.1,429.3 1377.1,429.7 1378.1,429.3 1379.1,429.7 1380.1,429.3 1381.1,429.3 1382.1,429.3 1383.1,429.3 1384.1,429.3 1385.1,428.8 1386.1,429.1 1387.1,429.1 1388.1,429.1 1389.1,429.4 1390.1,429.3 1391.1,429.9 1392.1,429.6 1393.1,429.4 1394.1,429.4 1395.1,429.6 1396.1,429.6 1397.1,429.6 1398.1,429.3 1399.1,429.6 1400.1,429.6 1401.1,429.9 1402.1,429.1 1403.1,428.9 1404.1,429.4 1405.1,429.4 1406.1,429 1407.1,429.5 1408.1,430.1 1409.1,429.2 1410.1,428.8 1411.1,429.3 1412.1,429.3 1413.1,429 1414.1,429.4 1415.1,429.4 1416.1,429 1417.1,429.6 1418.1,429.9 1419.1,429.6 1420.1,429.3 1421.2,429.9 1422.2,429.6 1423.2,429.6 1424.2,428.9 1425.2,429.3 1426.2,429.6 1427.2,429.9 1428.2,429.9 1429.2,429.9 1430.2,430.1 1431.2,429.8 1432.2,429.8 1433.2,430.1 1434.2,429.8 1435.2,429.8 1436.2,429.8 1437.2,429.2 1438.2,428.9 1439.2,429.8 1440.2,429.5 1441.2,430.1 1442.2,429.2 1443.2,429.2 1444.2,428.9 1445.2,428.9 1446.2,428.9 1447.2,428.9 1448.2,428.9 1449.2,428.9 1450.2,428.9 1451.2,429.4 1452.2,429.4 1453.2,429.1 1454.2,429.5 1455.2,429.8 1456.2,429.8 1457.2,429.6 1458.2,429.6 1459.2,429.6 1460.2,428.9 1461.2,428.9 1462.2,429.2 1463.2,429.2 1464.2,429.4 1465.2,429.4 1466.2,429.4 1467.2,429.4 1468.2,429.4 1469.2,428.9 1470.2,428.9 1471.2,430.1 1472.2,429.8 1473.2,428.9 1474.2,428.9 1475.2,429.4 1476.2,429.4 1477.2,429.4 1478.2,429.1 1479.2,428.9 1480.2,428.9 1481.2,428.9 1482.2,429.2 1483.2,428.8 1484.2,429.2 1485.2,428.8 1486.2,429.2 1487.2,428.8 1488.2,429.9 1489.2,429.1 1490.2,429.1 1491.2,429.4 1492.2,428.6 1493.2,428.9 1494.2,428.6 1495.2,430.2 1496.2,430.2 1497.2,429.5 1498.2,429.8 1499.2,429.5 1500.2,429.2 1501.2,429.2 1502.2,428.9 1503.2,428.6 1504.2,428.9 1505.2,428.9 1506.2,429.1 1507.2,429.7 1508.2,429.4 1509.2,429.4 1510.2,429.4 1511.2,429.4 1512.2,429.4 1513.2,429.4 1514.2,429.1 1515.2,429.6 1516.3,429.6 1517.3,429.6 1518.3,429.3 1519.3,429.3 1520.3,429.3 1521.3,429.9 1522.3,429.9 1523.3,429.9 1524.3,430.2 1525.3,429.9 1526.3,430.2 1527.3,429.9 1528.3,429.9 1529.3,429.5 1530.3,430.2 1531.3,429.9 1532.3,429.6 1533.3,429.6 1534.3,429.4 1535.3,429.4 1536.3,429.4 1537.3,429.6 1538.3,429.9 1539.3,429.4 1540.3,429.4 1541.3,429.4 1542.3,429.5 1543.3,429.4 1544.3,429.2 1545.3,429.2 1546.3,429.5 1547.3,429.2 1548.3,429.2 1549.3,429.2 1550.3,429.2 1551.3,429.2 1552.3,429.2 1553.3,429.2 1554.3,429.2 1555.3,429.5 1556.3,429.4 1557.3,428.9 1558.3,428.9 1559.3,429.2 1560.3,429.2 1561.3,429.2 1562.3,429.1 1563.3,429.4 1564.3,429.4 1565.3,429.7 1566.3,429.1 1567.3,429.4 1568.3,429.4 1569.3,429.4 1570.3,429.4 1571.3,429.4 1572.3,429.4 1573.3,429.4 1574.3,429.7 1575.3,429.4 1576.3,428.7 1577.3,429 1578.3,429 1579.3,428.7 1580.3,429.7 1581.3,429.7 1582.3,429.7 1583.3,429 1584.3,429 1585.3,428.7 1586.3,429 1587.3,428.7 1588.3,429 1589.3,429 1590.3,428.7 1591.3,429.3 1592.3,428.7 1593.3,429 1594.3,428.7 1595.3,429 1596.3,429 1597.3,429.3 1598.3,429 1599.3,429 1600.3,428.7 1601.3,429 1602.3,429.5 1603.3,429.2 1604.3,429.2 1605.3,428.9 1606.3,429.4 1607.3,429.8 1608.3,429.1 1609.3,429.2 1610.4,429.5 1611.4,429.2 1612.4,429.7 1613.4,429.7 1614.4,429.7 1615.4,429.7 1616.4,430.2 1617.4,429.9 1618.4,429 1619.4,429 1620.4,429.2 1621.4,429.9 1622.4,430.2 1623.4,429.9 1624.4,429.9 1625.4,428.9 1626.4,429.6 1627.4,429.3 1628.4,428.7 1629.4,429.3 1630.4,429 1631.4,429 1632.4,429.3 1633.4,429 1634.4,429 1635.4,429 1636.4,428.7 1637.4,429 1638.4,429 1639.4,429 1640.4,429 1641.4,429.5 1642.4,429.8 1643.4,429.8 1644.4,429.5 1645.4,429.5 1646.4,429.5 1647.4,429.9 1648.4,429.6 1649.4,429.2 1650.4,429.4 1651.4,429.2 1652.4,429.2 1653.4,429.1 1654.4,429.5 1655.4,429.8 1656.4,429.5 1657.4,429.1 1658.4,429.5 1659.4,429.1 1660.4,429.5 1661.4,429.8 1662.4,429.5 1663.4,429.5 1664.4,429.5 1665.4,429.4 1666.4,429.7 1667.4,429.2 1668.4,429.5 1669.4,429.5 1670.4,429.5 1671.4,429.2 1672.4,429.5 1673.4,429.4 1674.4,430 1675.4,429.4 1676.4,430 1677.4,429.9 1678.4,429.9 1679.4,429.9 1680.4,429.6 1681.4,429.9 1682.4,429.2 1683.4,428.9 1684.4,429.8 1685.4,429.5 1686.4,429.5 1687.4,429.2 1688.4,429.5 1689.4,429.5 1690.4,429.5 1691.4,429.5 1692.4,429.8 1693.4,429.2 1694.4,429 1695.4,429.3 1696.4,429.9 1697.4,429.3 1698.4,428.9 1699.4,429.6 1700.4,429.3 1701.4,428.9 1702.4,429.7 1703.5,430 1704.5,429.4 1705.5,429.4 1706.5,429.4 1707.5,429.7 1708.5,429.7 1709.5,429.8 1710.5,429.2 1711.5,429.5 1712.5,429.3 1713.5,429.3 1714.5,429.5 1715.5,429.3 1716.5,428.9 1717.5,429.3 1718.5,429.7 1719.5,430 1720.5,429.7 1721.5,429.4 1722.5,429.7 1723.5,429.9 1724.5,429.9 1725.5,429.9 1726.5,429.9 1727.5,429.9 1728.5,430.3 1729.5,429.8 1730.5,430 1731.5,429.4 1732.5,429.5 1733.5,429.7 1734.5,429.7 1735.5,429.4 1736.5,429.7 1737.5,429.7 1738.5,429.7 1739.5,429.7 1740.5,429.7 1741.5,429.7 1742.5,429.4 1743.5,429.4 1744.5,429.7 1745.5,430 1746.5,429.3 1747.5,429 1748.5,429.3 1749.5,429.3 1750.5,429.5" fill="none" stroke="#8cc72e" stroke-width="1.15" stroke-linejoin="round" shape-rendering="crispEdges"/>
<polyline points="3,734.5 55,734.5 60,733.2 65,731.8 70,730.5 75,729.1 80,727.8 85,726.5 90,725.2 95,723.8 100,722.5 105,721.2 110,719.9 115,718.6 120,717.3 125,716 130,714.7 135,713.5 140,712.2 145,710.9 150,709.6 155,708.4 160,707.1 165,705.9 170,704.6 175,703.4 180,702.1 185,700.9 190,699.7 195,698.4 200,697.2 205,696 210,694.8 215,693.6 220,692.4 225,691.2 230,690 235,688.8 240,687.6 245,686.5 250,685.3 255,684.1 260,682.9 265,681.8 270,680.6 275,679.5 280,678.3 285,677.2 290,676 295,674.9 300,673.7 305,672.6 310,671.5 315,670.4 320,669.3 325,668.1 330,667 335,665.9 340,664.8 345,663.7 350,662.6 355,661.6 360,660.5 365,659.4 370,658.3 375,657.3 380,656.2 385,655.2 390,654.1 395,653.1 400,652 405,651 410,650 415,648.9 420,647.9 425,646.9 430,645.9 435,644.9 440,643.9 445,642.9 450,641.9 455,640.9 460,639.9 465,638.9 470,637.9 475,636.9 480,635.9 485,635 490,634 495,633 500,632.1 505,631.1 510,630.2 515,629.2 520,628.3 525,627.4 530,626.4 535,625.5 540,624.6 545,623.7 550,622.8 555,621.9 560,621 565,620.1 570,619.2 575,618.4 580,617.5 585,616.6 590,615.8 595,614.9 600,614.1 605,613.2 610,612.4 615,611.5 620,610.7 625,609.8 630,609 635,608.1 640,607.3 645,606.5 650,605.7 655,604.8 660,604 665,603.2 670,602.4 675,601.6 680,600.8 685,600.1 690,599.3 695,598.5 700,597.8 705,597 710,596.3 715,595.5 720,594.8 725,594.1 730,593.4 735,592.7 740,592 745,591.3 750,590.7 755,590 760,589.4 765,588.7 770,588.1 775,587.4 780,586.8 785,586.2 790,585.6 795,584.9 800,584.3 805,583.7 810,583.1 815,582.5 820,581.9 825,581.3 830,580.8 835,580.2 840,579.6 845,579.1 850,578.5 855,578 860,577.4 865,576.9 870,576.4 875,575.8 880,575.3 885,574.8 890,574.3 895,573.8 900,573.3 905,572.8 910,572.3 915,571.9 920,571.4 925,570.9 930,570.5 935,570.1 940,569.6 945,569.2 950,568.7 955,568.3 960,567.9 965,567.4 970,567 975,566.6 980,566.2 985,565.7 990,565.3 995,564.9 1000,564.5 1005,564.1 1010,563.7 1015,563.3 1020,562.9 1025,562.6 1030,562.2 1035,561.8 1040,561.5 1045,561.1 1050,560.8 1055,560.4 1060,560.1 1065,559.8 1070,559.5 1075,559.2 1080,558.9 1085,558.6 1090,558.3 1095,558 1100,557.8 1105,557.5 1110,557.3 1115,557 1120,556.8 1125,556.5 1130,556.3 1135,556.1 1140,555.9 1145,555.6 1150,555.4 1155,555.2 1160,555 1165,554.8 1170,554.6 1175,554.4 1180,554.2 1185,554 1190,553.8 1195,553.6 1200,553.4 1205,553.3 1210,553.1 1215,552.9 1220,552.7 1225,552.6 1230,552.4 1235,552.3 1240,552.1 1245,552 1250,551.8 1255,551.7 1260,551.5 1265,551.4 1270,551.3 1275,551.1 1280,551 1285,550.9 1290,550.8 1295,550.6 1300,550.5 1305,550.4 1310,550.3 1315,550.2 1320,550.1 1325,550 1330,549.9 1335,549.8 1340,549.7 1345,549.7 1350,549.6 1355,549.5 1360,549.5 1365,549.4 1370,549.4 1375,549.3 1380,549.3 1385,549.3 1390,549.2 1395,549.2 1400,549.2 1405,549.2 1410,549.2 1415,549.2 1420,549.3 1425,549.3 1430,549.3 1435,549.4 1440,549.4 1445,549.5 1450,549.5 1455,549.6 1460,549.7 1465,549.7 1470,549.8 1475,549.9 1480,549.9 1485,550 1490,550.1 1495,550.2 1500,550.3 1505,550.4 1510,550.5 1515,550.6 1520,550.7 1525,550.8 1530,551 1535,551.1 1540,551.2 1545,551.4 1550,551.5 1555,551.6 1560,551.8 1565,552 1570,552.2 1575,552.4 1580,552.6 1585,552.8 1590,553.1 1595,553.3 1600,553.5 1605,553.8 1610,554 1615,554.3 1620,554.5 1625,554.8 1630,555 1635,555.2 1640,555.5 1645,555.7 1650,555.9 1655,556.2 1660,556.4 1665,556.7 1670,556.9 1675,557.1 1680,557.4 1685,557.6 1690,557.9 1695,558.1 1700,558.4 1705,558.6 1710,558.9 1715,559.1 1720,559.4 1725,559.7 1730,559.9 1735,560.2 1740,560.4 1745,560.7 1750,561 1750.5,561" fill="none" stroke="#f28f22" stroke-width="1.15" stroke-linejoin="round" shape-rendering="crispEdges"/>
<polyline points="42,964.6 43,964.6 44,964.6 45,964.6 46,964.6 47,964.6 48,964.6 49,964.6 50,964.6 51,964.6 52,964.6 53,964.6 54,964.6 55,964.6 56,963.5 57,964.5 58,965.6 59,965.5 60,965.5 61,965.5 62,965.5 63,965.4 64,965.4 65,965.4 66,965.4 67,965.3 68,965.3 69,965.3 70,965.2 71,965.2 72,965.2 73,965.2 74,965.1 75,965.1 76,965.1 77,965.1 78,965 79,965 80,965 81,965.2 82,965.5 83,965.8 84,966 85,965.9 86,965.7 87,965.6 88,965.5 89,965.3 90,965.2 91,965.2 92,965.2 93,965.2 94,965.1 95,965.1 96,965.1 97,965.1 98,965.1 99,965.1 100,965 101,965 102,965 103,965 104,965 105,965 106,965 107,964.9 108,964.9 109,964.9 110,964.9 111,964.9 112,964.9 113,964.8 114,964.8 115,964.8 116,964.8 117,964.8 118,964.8 119,964.8 120,964.7 121,964.7 122,964.7 123,964.7 124,964.7 125,964.7 126,964.6 127,964.6 128,964.6 129,964.6 130,964.6 131,964.6 132,964.6 133,964.5 134,964.5 135,964.5 136,964.5 137,964.5 138,964.5 139,964.4 140,964.4 141,964.4 142,964.4 143,964.4 144,964.4 145,964.4 146,964.3 147,964.3 148,964.3 149,964.3 150,964.3 151,964.3 152,964.2 153,964.2 154,964.2 155,964.2 156,964.2 157,964.2 158,964.1 159,964.1 160,964.1 161,964.1 162,964.1 163,964.1 164,964.1 165,964 166,964 167,964 168,964 169,964 170,964 171,963.9 172,963.9 173,963.9 174,963.9 175,963.9 176,963.9 177,963.9 178,963.8 179,963.8 180,963.8 181,963.8 182,963.8 183,963.8 184,963.7 185,963.7 186,963.7 187,963.7 188,963.7 189,963.7 190,963.7 191,963.6 192,963.6 193,963.6 194,963.6 195,963.6 196,963.6 197,963.5 198,963.5 199,963.5 200,963.5 201,963.4 202,963.4 203,963.3 204,962.9 205,962.5 206,962 207,961.6 208,961.2 209,960.8 210,960.3 211,959.9 212,959.5 213,959 214,958.6 215,958.1 216,957.6 217,957.1 218,956.7 219,956.2 220,955.7 221,955.2 222,954.8 223,954.3 224,953.8 225,953.4 226,952.9 227,952.4 228,951.9 229,951.5 230,951 231,950.6 232,950.2 233,949.8 234,949.5 235,949.1 236,948.7 236.9,948.3 237.9,947.9 238.9,947.5 239.9,947.1 240.9,946.7 241.9,946.4 242.9,946 243.9,945.6 244.9,945.2 245.9,944.8 246.9,944.4 247.9,944 248.8,943.7 249.8,943.3 250.8,942.9 251.8,942.5 252.8,942.1 253.8,941.7 254.8,941.3 255.8,941 256.8,940.6 257.8,940.2 258.8,939.8 259.8,939.4 260.7,939 261.7,938.6 262.7,938.2 263.7,937.9 264.7,937.5 265.7,937.1 266.7,936.7 267.7,936.4 268.7,936.1 269.7,935.7 270.7,935.4 271.7,935.1 272.8,934.8 273.8,934.4 274.8,934.1 275.8,933.8 276.8,933.5 277.8,933.1 278.8,932.8 279.8,932.5 280.8,932.2 281.8,931.8 282.8,931.5 283.9,931.2 284.9,930.9 285.9,930.5 286.9,930.2 287.9,929.9 288.9,929.6 289.9,929.2 290.9,928.9 291.9,928.6 292.9,928.3 293.9,927.9 295,927.6 296,927.3 297,927 298,926.6 299,926.3 300,926 301,925.7 302,925.8 303,924.9 304,925.1 305,925.1 306,924.9 307,924.6 308,924.2 309,923.6 310,923.7 311,923.4 312,922.6 313,922 314,921.8 315,921.8 316,921.6 317,921 318,921.3 319,920.8 320,920.5 321,919.9 322,920 323,919.7 324,919.4 325,918.9 326,918.9 327,918.3 328,918.8 329,918.8 330,918.3 331,918.1 332,917.6 333,917.3 334,917.5 335,916.7 336,916.4 337,916.1 338,915.7 338.9,915.8 339.9,915.5 340.9,915.2 341.9,914.9 342.9,914.6 343.9,914.6 344.9,913.5 345.9,912.9 346.9,913.9 347.9,912.6 348.9,912.6 349.9,912.3 350.8,912 351.8,911.7 352.8,911.4 353.8,911.1 354.8,910.8 355.8,910.5 356.8,910.3 357.8,909.7 358.8,909.4 359.8,909.7 360.8,909.4 361.7,908.8 362.7,908.5 363.7,908.2 364.7,907.9 365.7,907.3 366.7,906.5 367.7,906.9 368.7,907 369.7,905.9 370.7,905.7 371.6,905.7 372.6,905.1 373.6,905.2 374.6,904.6 375.6,904.6 376.6,904.4 377.6,904.1 378.6,903.8 379.6,903.5 380.6,903.6 381.5,903 382.5,902.6 383.5,902.4 384.5,902.7 385.5,902.5 386.5,901.9 387.5,901.6 388.5,901.3 389.5,901.5 390.5,901.2 391.4,901 392.4,900.7 393.4,900.4 394.4,900.1 395.4,900.2 396.4,899.9 397.4,898.6 398.4,898.9 399.4,898 400.4,898.4 401.3,897.8 402.3,898 403.3,898 404.3,897.3 405.3,896.4 406.3,896.1 407.3,896.1 408.3,895.8 409.3,895.8 410.2,895.2 411.2,894.9 412.2,895.1 413.2,894.5 414.2,893.9 415.2,893.9 416.2,893.3 417.2,893.3 418.2,893.3 419.1,892.8 420.1,892.2 421.1,891.4 422.1,891.1 423.1,890.8 424.1,891.3 425.1,891 426.1,890.4 427.1,889.8 428.1,889.8 429,889.2 430,889.5 431,888.7 432,888.4 433,888.1 434,887.5 435,887.8 436,886.9 437,886.9 438,887.6 438.9,886.5 439.9,886.2 440.9,885.9 441.9,886.1 442.9,885.8 443.9,885.5 444.9,885.2 445.9,884.3 446.9,884 447.9,883.3 448.9,883.4 449.9,883.1 450.8,883.1 451.8,882.8 452.8,882.2 453.8,881.7 454.8,881.7 455.8,881.1 456.8,881.2 457.8,880.5 458.8,880.5 459.8,879.6 460.8,879.3 461.7,879 462.7,880 463.7,879.4 464.7,879.1 465.7,878.8 466.7,878.1 467.7,877.5 468.7,877.6 469.7,877.7 470.7,877.2 471.7,877.2 472.8,876.4 473.8,876.5 474.8,876.2 475.8,876 476.8,875.8 477.8,875.2 478.8,875.6 479.8,875.1 480.8,874.9 481.8,875.1 482.8,874.5 483.9,873.8 484.9,873.7 485.9,873.4 486.9,873.8 487.9,873.2 488.9,872.9 489.9,872.7 490.9,872.5 491.9,872.8 492.9,872.5 493.9,871.8 495,871.7 496,870.9 497,871.3 498,871 499,870.8 500,870.2 501,869.7 502,869.7 503,870.1 504,870.1 505,869.5 506,869.2 507,869.2 508,868.7 509,868.4 510,868 511,867.7 512,867.7 513,867.2 514,866.1 515,867.4 516,866.3 517,866.4 518,865.8 519,865.2 520,864.9 521,864.7 522,864.7 523,864.4 524,863.8 525,863.9 526,863.4 527,863.1 528,862.7 529,862.6 530,862.3 531,861.7 532,861.4 533,861.9 534,861.8 535,861.3 536,861.5 537,860.9 538,860.8 539,861 540,861 541,861.9 542,863.3 543,863.7 544,863.6 545,862.8 546,862.2 547,862.1 548,862.1 549,861.4 550,861 551,860.5 552,860.6 552.9,860.7 553.9,860.5 554.9,860.2 555.9,860.2 556.9,860.1 557.9,859.8 558.8,859.9 559.8,859.7 560.8,859.8 561.8,859.3 562.8,859 563.8,857.9 564.7,858.1 565.7,857.6 566.7,857.7 567.7,857 568.7,857.2 569.7,857 570.7,856.9 571.7,856.7 572.8,856.3 573.8,856.5 574.8,856.5 575.8,856 576.8,855.9 577.8,855.7 578.8,855.9 579.8,855.4 580.8,855.4 581.8,855.2 582.8,855.7 583.9,855.6 584.9,855.1 585.9,855.3 586.9,854.4 587.9,854.3 588.9,854.1 589.9,854.2 590.9,853.7 591.9,853.9 592.9,853.3 593.9,852.8 595,853.7 596,852.9 597,852.7 598,852.6 599,852.1 600,852.7 601,852.7 602,852.9 603,852.8 604,852.7 605,852.7 606,852.7 607,852.6 608,852.5 609,851.8 610,852.2 611,852.2 612,852.1 613,852.5 614,852.5 615,852.7 616,852.4 617,852 618,852.3 619,852.5 620,851.7 621,850.8 621.9,850 622.9,849.1 623.8,848 624.8,847.1 625.7,846.2 626.7,845.5 627.7,846 628.7,845.1 629.8,845 630.8,845.3 631.8,845.4 632.8,845.4 633.9,845.3 634.9,845.3 635.9,845.2 636.9,845.2 638,844.8 639,845.1 640,844.7 641,844.9 642,844.3 643,844.2 644,844.1 644.9,843.9 645.9,844.4 646.9,844.1 647.9,844.3 648.9,843.6 649.9,843.8 650.9,843.7 651.9,843.8 652.9,843.6 653.8,843.5 654.8,842.9 655.8,843 656.8,842.7 657.8,842.9 658.8,842.5 659.8,842.6 660.8,842.2 661.8,843.1 662.7,842.6 663.7,842.8 664.7,841.8 665.7,841.7 666.7,841.2 667.7,841.1 668.7,841.2 669.7,840.4 670.7,840.5 671.7,840.4 672.7,840.6 673.7,840.4 674.7,840.2 675.8,840 676.8,839.5 677.8,839.6 678.8,839.4 679.8,839.2 680.8,839.1 681.8,838.9 682.8,838.7 683.8,838.5 684.8,838 685.8,837.9 686.8,837.4 687.8,837.5 688.8,837.6 689.8,837.1 690.8,836.9 691.8,836.7 692.8,836.8 693.9,836.3 694.9,836.4 695.9,836.2 696.9,836.4 697.9,835.9 698.9,835.7 699.9,835.5 700.9,835.6 701.9,835.4 702.9,834.8 703.9,834.6 704.9,833.8 705.9,833.6 706.9,833.4 707.9,833.7 708.9,833.6 709.9,832.8 710.9,832.9 712,832.9 713,833 714,833.3 715,833.1 716,832 717,831.5 718,831.6 719,832.3 720,831.7 721,831.6 722,831.9 723,831.5 724,831.1 725,831.8 726,831.9 727,831.9 728,831.9 729,831.8 730,831.6 731,831.8 732,831.6 733,831.6 734,830.4 735,830.7 736,830.7 737,830.7 738,830.6 739,831 740,831 741.3,825 742.3,826.4 743.3,827.8 744.3,828.5 745.3,829.3 746.3,829.7 747.3,830.1 748.3,830.4 749.3,830.6 750.3,830.7 751.3,830.9 752.3,830.9 753.3,831 754.7,820 755.7,822.1 756.7,824.2 757.7,825.3 758.7,826.4 759.7,827.1 760.7,827.7 761.7,828.1 762.7,828.4 763.7,828.6 764.7,828.8 765.7,828.9 766.7,829 767.7,820 768.6,821.8 769.5,823.6 770.4,824.5 771.2,825.5 772.1,826.1 773,826.6 773.9,826.9 774.8,827.2 775.6,827.4 776.5,827.5 777.4,827.6 778.3,827.7 779.3,821 780.2,822.5 781.1,824.1 782,824.9 782.9,825.8 783.8,826.3 784.6,826.7 785.5,827 786.4,827.3 787.3,827.4 788.2,827.5 789.1,827.6 790,827.7 791,818.3 791.8,820.2 792.5,822.2 793.2,823.2 794,824.3 794.8,824.9 795.5,825.5 796.2,825.8 797,826.1 797.8,826.3 798.5,826.5 799.2,826.6 800,826.7 801.3,819 802.8,822.6 804.2,824.5 805.6,825.6 807.1,826.2 808.5,826.5 810,826.7 811.3,821.7 812.3,822.7 813.3,823.7 814.3,824.2 815.3,824.8 816.3,825.1 817.3,825.4 818.3,825.5 819.3,825.7 820.3,825.8 821.3,825.9 822.3,825.9 823.3,826 824.1,824.4 825,822.7 826,822 827,822 828,821.9 829,822.3 830.1,821.4 831.1,821.7 832.1,821.7 833.1,821.6 834.1,822.8 835.1,822.7 836.1,822.8 837.1,822.3 838.1,821.8 839.1,821.7 840.2,821.2 841.2,822.7 842.2,821.7 843.2,821.6 844.2,821.5 845.2,821.5 846.2,821 847.2,820.9 848.2,821.3 849.3,821.5 850.3,822.2 851.3,821.3 852.3,821.7 853.3,821.2 854.3,820.8 855.2,820.4 856.2,820.4 857.1,819.6 858.1,819.8 859,819 860,818.3 861,818.3 862,818 863,817.6 864.1,818.9 865.1,818.9 866.1,818.9 867.1,818.9 868.1,818.9 869.1,818.9 870.1,818.6 871.1,818.2 872.2,818.3 873.2,818.7 874.2,818 875.2,818 876.2,817.7 877.2,817.3 878.2,817.7 879.2,817.3 880.3,817.7 881.3,818.3 882.3,818.3 883.3,818.3 884.3,817.8 885.2,816.6 886.2,816.6 887.1,816.5 888.1,815.6 889,814.8 890,814.7 891,814.7 892,815.6 893.1,815.6 894.1,815.3 895.1,814.9 896.1,814.7 897.2,814.7 898.2,815.1 899.2,814.3 900.2,815.1 901.3,814.7 902.3,814.7 903.3,814.7 904.3,814.3 905.2,813.2 906.2,812.8 907.1,813.3 908.1,813.3 909,812.7 910,812.3 911,813.3 912,812.8 913,812.7 914,812.6 915,812.2 916,812.9 917,811.8 918,812.4 919,812.1 920,811.2 921,812 922,812.2 923,811.8 924,811.3 925,811.7 926,811.3 927,812.2 928,811.7 929,811.7 930,811.2 931.1,810.5 932.2,809.2 933.3,807.7 934.3,808.1 935.3,807.7 936.4,807.7 937.4,807.2 938.4,808.5 939.4,807.6 940.4,808 941.4,806.8 942.5,807.1 943.5,806.7 944.5,806.6 945.5,806.6 946.5,806.7 947.5,807.5 948.6,807.5 949.6,807 950.6,807 951.6,806.3 952.6,806.3 953.6,806.2 954.7,806.2 955.7,806.1 956.7,806.4 957.8,804.8 958.9,804.6 960,803 961,803 962,802.5 963,802.5 964.1,802.4 965.1,803.3 966.1,802.8 967.1,802.8 968.1,802.7 969.1,802.7 970.2,802.7 971.2,802.9 972.2,802.9 973.2,803.5 974.2,803.4 975.2,802.4 976.3,802.8 977.3,802.7 978.3,803.1 979.1,800 980,797.3 981,797.6 982,796.8 983,797.7 984,797.6 985,797.5 986,797.4 987,797.3 988,797.7 989,796.8 990,797.1 991,797 992,797.4 993,796.1 994,796.5 995,796.4 996,796.7 997,796.2 998,796 999,795.5 1000,795 1001,795.3 1002,795.1 1003,794.6 1004.1,795.5 1005.1,795.3 1006.1,794.9 1007.1,795.2 1008.1,794.6 1009.1,794.1 1010.2,794.8 1011.2,794.2 1012.2,794.1 1013.2,794 1014.2,793.5 1015.2,793.4 1016.3,792.8 1017.3,792.7 1018.3,792.6 1019.3,794.1 1020.3,793.9 1021.3,795 1022.3,795.7 1023.3,796.7 1024.3,796.6 1025.3,796.6 1026.4,795.9 1027.4,795.8 1028.4,795.7 1029.4,795.5 1030.4,796.5 1031.4,796.4 1032.5,796.3 1033.5,796 1034.5,795.9 1035.5,795.8 1036.5,795.4 1037.5,794.9 1038.6,795.7 1039.6,794.8 1040.6,795.6 1041.6,795.5 1042.6,794.9 1043.6,795.2 1044.7,795.6 1045.7,794.7 1046.7,795 1048,783.3 1048.7,813.3 1049.7,815 1050.7,816.7 1051.7,814.8 1052.7,812.8 1053.7,810.9 1054.7,808.9 1055.7,807 1056.7,805 1057.7,803.9 1058.7,802.7 1059.7,801.6 1060.7,800.4 1061.7,799.3 1062.7,800.4 1063.7,801.6 1064.7,802.7 1065.7,803.9 1066.7,805 1067.8,807.5 1069,810 1069.4,804 1070,821.7 1070.7,881.7 1071.6,889.5 1072.4,897.2 1073.3,905 1074.4,911.7 1075.6,918.3 1076.7,925 1077.7,928.3 1078.7,931.7 1079.7,935 1080.7,938.4 1081.7,941.7 1082.7,942.7 1083.8,943.8 1084.8,944.8 1085.8,945.9 1086.9,946.9 1087.9,947.9 1089,949 1090,950 1091,950.5 1092,950.9 1093.1,951.4 1094.1,951.8 1095.1,952.3 1096.1,952.8 1097.2,953.2 1098.2,953.7 1099.2,954.2 1100.2,954.6 1101.3,955.1 1102.3,955.5 1103.3,956 1104.3,956.2 1105.3,956.5 1106.2,956.7 1107.2,956.9 1108.2,957.2 1109.2,957.4 1110.2,957.6 1111.2,957.9 1112.1,958.1 1113.1,958.4 1114.1,958.6 1115.1,958.8 1116.1,959.1 1117.1,959.3 1118,959.5 1119,959.8 1120,960 1121,960 1122,960 1123,960 1124,960 1125,960 1126,960 1127,960 1128,960 1129,960 1130,960 1131,960 1132,960 1133,960 1134,960 1135,960 1136,960 1137,960 1138,960 1139,960 1140,960 1141,960.1 1142,960.1 1143,960.1 1144,960.1 1145,960.1 1146,960.1 1147,960.1 1148,960.1 1149,960.1 1150,960.1 1151,960.1 1152,960.1 1153,960.1 1154,960.1 1155,960.1 1156,960.1 1157,960.1 1158,960.1 1159,960.1 1160,960.1 1161,960.1 1162,960.1 1163,960.1 1164,960.1 1165,960.1 1166,960.1 1167,960.1 1168,960.1 1169,960.1 1170,960.1 1171,960.1 1172,960.1 1173,960.1 1174,960.1 1175,960.1 1176,960.1 1177,960.1 1178,960.1 1179,960.1 1180,960.1 1181,960.2 1182,960.2 1183,960.2 1184,960.2 1185,960.2 1186,960.2 1187,960.2 1188,960.2 1189,960.2 1190,960.2 1191,960.2 1192,960.2 1193,960.2 1194,960.2 1195,960.2 1196,960.2 1197,960.2 1198,960.2 1199,960.2 1200,960.2 1201,960.2 1202,960.2 1203,960.2 1204,960.2 1205,960.2 1206,960.2 1207,960.2 1208,960.2 1209,960.2 1210,960.2 1211,960.2 1212,960.2 1213,960.2 1214,960.2 1215,960.2 1216,960.2 1217,960.2 1218,960.2 1219,960.2 1220,960.2 1221,960.3 1222,960.3 1223,960.3 1224,960.3 1225,960.3 1226,960.3 1227,960.3 1228,960.3 1229,960.3 1230,960.3 1231,960.3 1232,960.3 1233,960.3 1234,960.3 1235,960.3 1236,960.3 1237,960.3 1238,960.3 1239,960.3 1240,960.3 1241,960.3 1242,960.3 1243,960.3 1244,960.3 1245,960.2 1246,960.2 1247,960.2 1248,960.2 1249,960.2 1250,960.2 1251,960.2 1252,960.2 1253,960.2 1254,960.2 1255,960.1 1256,960.1 1257,960.1 1258,960.1 1259,960.1 1260,960.1 1261,960.1 1261.9,960.1 1262.9,960.1 1263.9,960.1 1264.9,960 1265.9,960 1266.9,960 1267.9,960 1268.9,960 1269.9,960 1270.9,960 1271.9,960 1272.9,960 1273.9,960 1274.9,959.9 1275.9,959.9 1276.9,959.9 1277.9,959.9 1278.9,959.9 1279.9,959.9 1280.9,960.1 1281.9,959.9 1282.9,959.9 1283.9,959.6 1284.9,960 1285.9,959.8 1286.9,959.8 1287.9,959.8 1288.9,960 1289.9,960 1290.9,959.8 1291.9,959.8 1292.9,959.8 1293.9,959.6 1294.9,959.8 1295.9,959.9 1296.9,959.9 1297.9,959.6 1298.9,959.6 1299.9,959.6 1300.9,959.4 1301.9,959.4 1302.9,959.1 1303.8,959.3 1304.8,959.3 1305.8,959.5 1306.8,959.5 1307.8,959.6 1308.8,959.6 1309.8,959.9 1310.8,959.6 1311.8,959.8 1312.8,959.6 1313.8,959.5 1314.8,959.5 1315.8,959.5 1316.8,959.3 1317.8,959.5 1318.8,959.5 1319.8,959.6 1320.8,959.6 1321.8,959.6 1322.8,959.4 1323.8,959.4 1324.8,959.1 1325.8,959.1 1326.8,958.9 1327.8,959.1 1328.8,959.3 1329.8,959 1330.8,959.4 1331.8,959.2 1332.8,959.2 1333.8,959.2 1334.8,959 1335.8,959.5 1336.8,959.2 1337.8,959.7 1338.8,959.4 1339.8,959.3 1340.8,959.1 1341.8,959.3 1342.8,959.2 1343.8,959.2 1344.8,959.2 1345.7,959 1346.7,959.2 1347.7,959.2 1348.7,959.2 1349.7,959.2 1350.7,959 1351.7,959.4 1352.7,958.9 1353.7,958.9 1354.7,959.1 1355.7,959.1 1356.7,959.1 1357.7,959.1 1358.7,958.8 1359.7,958.8 1360.7,958.8 1361.7,958.8 1362.7,958.7 1363.7,958.7 1364.7,958.9 1365.7,959 1366.7,959.2 1367.8,959 1368.8,959.3 1369.8,959.3 1370.9,959.8 1372,960.1 1373,960.4 1374,960 1375,960.1 1376,960.2 1377,959.8 1378,959.8 1379,959.9 1380,959.5 1381,959.3 1382,959.3 1383,959.2 1384,959.4 1385,959.2 1386,958.9 1387,959.7 1388,959.7 1389,959.7 1390,959.5 1391,959.5 1392,959.9 1393,959.7 1394,959.7 1395,959.7 1396,959.7 1397,959.2 1398,959 1399,959 1400,959.7 1401,959.7 1402,959.5 1403,959.2 1404,959.4 1405,959.4 1406,959.2 1407,959.3 1408,959.3 1409,959.3 1410,958.9 1411,958.7 1412,959.1 1413,959.1 1414,958.9 1415,958.9 1416,958.9 1417,958.9 1418,958.7 1419,958.9 1420,959 1421,959.1 1422,959.1 1423,959.1 1424,959.1 1425,959.1 1426,959.1 1427,959.1 1428,959.1 1429,959.1 1430,959.1 1431,959.1 1432,959.1 1433,959 1434,959 1435,959 1436,959 1437,959 1438,959 1439,959 1440,959 1441,959 1442,959 1443,959 1444,959 1445,958.9 1446,958.9 1447,958.9 1448,958.9 1449,958.9 1450,958.9 1451,958.9 1452,958.9 1453,958.9 1454,958.9 1455,958.9 1456,958.8 1457,958.8 1458,958.8 1459,958.8 1460,958.8 1461,958.8 1462,958.8 1463,958.8 1464,958.8 1465,958.8 1466,958.8 1467,958.8 1468,958.7 1469,958.7 1470,958.7 1471,958.7 1472,958.7 1473,958.7 1474,958.7 1475,958.7 1476,958.7 1477,958.7 1478,958.7 1479,958.7 1480,958.6 1481,958.6 1482,958.6 1483,958.6 1484,958.6 1485,958.6 1486,958.6 1487,958.6 1488,958.6 1489,958.6 1490,958.3 1491,958.5 1492,958.8 1493,958.2 1494,958 1495,958.2 1496,958.7 1497,958.6 1498,958.3 1499,958.3 1500,958.3 1501,958.5 1502,958.2 1503,958.4 1504,958.4 1505,958.7 1506,958.4 1507,958.4 1508,957.9 1509,958.2 1510,958 1511,958.2 1512,958.1 1513,958.1 1514,958.5 1515,958 1516,957.8 1517,958.2 1518,957.8 1519,957.8 1520,958.3 1521,958.4 1522,958.6 1523,958.6 1524,958.3 1525,957.9 1526,958.1 1527,958.1 1528,958.1 1529,957.8 1530,957.8 1531,957.8 1532,958 1533,958.4 1534,958.7 1535,958.6 1536,958.6 1537,958.4 1538,958.4 1539,958.4 1540,958.6 1541,958.4 1542,958.6 1543,957.7 1544.1,957.9 1545.1,958.2 1546.1,958.3 1547.1,958.5 1548.1,958.5 1549.1,958.5 1550.1,957.8 1551.1,957.9 1552.1,958.2 1553.1,958.2 1554.1,958.2 1555.1,958.2 1556.1,958.2 1557.1,958.2 1558.1,958.2 1559.1,957.9 1560.1,957.8 1561.1,957.8 1562.1,957.8 1563.1,957.8 1564.1,957.8 1565.1,957.8 1566.1,957.8 1567.1,957.8 1568.1,957.8 1569.1,957.7 1570.1,957.7 1571.1,957.7 1572.1,957.7 1573.1,957.7 1574.1,957.7 1575.1,957.7 1576.1,957.7 1577.1,957.7 1578.1,957.6 1579.1,957.6 1580.1,957.6 1581.1,957.6 1582.1,957.6 1583.1,957.6 1584.1,957.6 1585.1,957.6 1586.1,957.6 1587.1,957.5 1588.1,957.5 1589.2,957.5 1590.2,957.5 1591.2,957.5 1592.2,957.5 1593.2,957.5 1594.2,957.5 1595.2,957.5 1596.2,957.4 1597.2,957.4 1598.2,957.4 1599.2,957.4 1600.2,957.4 1601.2,957.4 1602.2,957.4 1603.2,957.4 1604.2,957.4 1605.2,957.3 1606.2,957.3 1607.2,957.3 1608.2,957.3 1609.2,957.3 1610.2,957.3 1611.2,957.3 1612.2,957.3 1613.2,957.2 1614.2,957.2 1615.2,957.2 1616.2,957.2 1617.2,957.2 1618.2,957.2 1619.2,957.2 1620.2,956.9 1621.2,956.6 1622.2,957.1 1623.2,956.8 1624.2,956.8 1625.2,956.9 1626.2,957.1 1627.2,957.1 1628.2,956.9 1629.2,957.1 1630.2,957.1 1631.2,956.9 1632.2,957.3 1633.2,957.3 1634.2,957.3 1635.2,956.6 1636.3,956.8 1637.3,957.2 1638.3,957 1639.3,957.2 1640.3,956.9 1641.3,956.9 1642.3,956.9 1643.3,956.9 1644.3,956.9 1645.3,956.9 1646.3,956.9 1647.3,956.9 1648.3,956.9 1649.3,956.8 1650.3,956.8 1651.3,956.8 1652.3,956.8 1653.3,956.8 1654.3,956.8 1655.3,956.8 1656.3,956.8 1657.3,956.8 1658.3,956.7 1659.3,956.7 1660.3,956.7 1661.3,956.7 1662.3,956.7 1663.3,956.7 1664.3,956.7 1665.3,956.7 1666.3,956.6 1667.3,956.6 1668.3,956.6 1669.3,956.6 1670.3,956.6 1671.3,956.6 1672.3,956.6 1673.3,956.6 1674.3,956.6 1675.3,956.5 1676.3,956.5 1677.3,956.5 1678.3,956.5 1679.3,956.5 1680.3,956.5 1681.3,956.5 1682.4,956.5 1683.4,956.5 1684.4,956.4 1685.4,956.4 1686.4,956.4 1687.4,956.4 1688.4,956.4 1689.4,956.4 1690.4,956.4 1691.4,956.4 1692.4,956.4 1693.4,956.3 1694.4,956.3 1695.4,956.3 1696.4,956.3 1697.4,956.3 1698.4,956.3 1699.4,956.3 1700.4,956.3 1701.4,956.3 1702.4,956.2 1703.4,956.2 1704.4,956.2 1705.4,956.2 1706.4,956.2 1707.4,956.2 1708.4,956.2 1709.4,956.2 1710.4,956.2 1711.4,956.1 1712.4,956.1 1713.4,956.1 1714.4,956.1 1715.4,956.1 1716.4,956.1 1717.4,956.1 1718.4,956.1 1719.4,956.1 1720.4,956 1721.4,956 1722.4,956 1723.4,956 1724.4,956 1725.4,956 1726.4,956 1727.5,956 1728.5,955.9 1729.5,955.9 1730.5,955.9 1731.5,955.9 1732.5,955.9 1733.5,955.9 1734.5,955.9 1735.5,955.9 1736.5,955.9 1737.5,955.8 1738.5,955.8 1739.5,955.8 1740.5,955.8 1741.5,955.8 1742.5,955.8 1743.5,955.8 1744.5,955.8 1745.5,955.8 1746.5,955.7 1747.5,955.7 1748.5,955.7 1749.5,955.7 1750.5,955.7" fill="none" stroke="#85379e" stroke-width="1.25" stroke-linejoin="round" shape-rendering="crispEdges"/>
<polyline points="3,265.5 4,265.5 5,265.5 6,265.5 7,265.5 8,265.5 9,265.5 10.1,265.5 11.1,265.5 12.1,265.5 13.1,265.5 14.1,265.5 15.1,265.5 16.1,265.5 17.1,265.5 18.1,265.5 19.1,265.5 20.1,265.5 21.1,265.5 22.1,265.5 23.2,265.5 24.2,265.5 25.2,265.5 26.2,265.5 27.2,265.5 28.2,265.5 29.2,265.5 30.2,265.5 31.2,265.5 32.2,265.5 33.2,265.5 34.2,265.5 35.3,265.5 36.3,265.5 37.3,265.5 38.3,265.5 39.3,265.5 40.3,265.5 41.3,265.5 42.3,265.5 43.3,265.5 44.3,265.5 45.3,265.5 46.3,265.5 47.3,265.5 48.4,265.5 49.4,265.5 50.4,265.5 51.4,265.5 52.4,265.5 53.4,265.5 54.4,265.5 55,258.8 55.6,271 56.5,265 57.2,265.6 58,266.2 59,265.6 60,265 61,265.3 62,265.7 63,266 64,265.8 65,265.5 66,265.3 67,265.3 68,265.3 69,265.3 70,265.4 71,265.4 72,265.4 73,265.4 74,265.4 75,265.4 76,265.4 77,265.4 78,265.4 79,265.5 80,265.5 81,265.5 82,265.5 82.5,268.8 83,257.5 84,259 85,257.5 86,256 87,255.1 88,254.2 89,253.4 90,252.5 91,251.8 92,251 93,250.2 94,249.5 95,248.8 96,248 97,247.2 98,246.5 99,245.8 100,245 101,244.4 102,243.9 103,243.3 104,242.8 105,242.2 106,241.7 107,241.2 108,240.6 109,240.1 110,239.5 111,239.1 112,238.6 113,238.2 114,237.8 115,237.3 116,236.9 117,236.5 118,236 119,235.6 120,235.2 121,234.7 122,234.3 123,233.9 124,233.4 125,233 126,232.7 127,232.3 128,232 129,231.7 130,231.3 131,231 132,230.7 133,230.3 134,230 135,229.7 136,229.3 137,229 138,228.7 139,228.3 140,228 141,227.8 142,227.5 143,227.2 144,227 145,226.8 146,226.5 147,226.2 148,226 149,225.8 150,225.5 151,225.2 152,225 153,224.8 154,224.5 155,224.2 156,224 157,223.8 158,223.5 159,223.2 160,223 161,222.9 162,222.7 163,222.6 164,222.4 165,222.3 166,222.1 167,222 168,221.8 169,221.7 170,221.5 171,221.4 172,221.2 173,221.1 174,220.9 175,220.8 176,220.7 176.9,220.5 177.9,220.4 178.9,220.2 179.9,220.1 180.8,220 181.8,219.8 182.8,219.7 183.8,219.6 184.7,219.4 185.7,219.3 186.7,219.1 187.6,219 188.6,218.9 189.6,218.7 190.6,218.6 191.5,218.4 192.5,218.3 193.5,218.3 194.5,218.3 195.5,218.3 196.5,218.3 197.5,218.3 198.5,218.3 199.5,218.3 200.5,218.3 201.5,218.3 202.5,218.3 203.5,218.8 204.5,219.4 205.5,219.9 206.5,220.5 207.5,221 208.5,221.8 209.5,222.6 210.5,223.4 211.5,224.2 212.5,225 213.4,225.3 214.4,225.6 215.3,225.9 216.2,226.2 217.2,226.6 218.1,226.9 219.1,227.2 220,227.5 221,227.6 222,227.8 223,227.9 224,228 225,228.2 226,228.3 227,228.4 228,228.6 229,228.7 230,228.8 231,229 232,229.1 233,229.2 234,229.4 235,229.5 236,229.7 237,229.9 238,230.1 239,230.3 240,230.5 241,230.7 242,230.9 243,231.1 244,231.3 245,231.5 246,231.7 247,231.9 248,232.1 249,232.3 250,232.5 251,232.8 252,233 253,233.2 254,233.5 255,233.8 256,234 257,234.2 258,234.5 259,234.8 260,235 261,235.1 262,235.3 263,235.4 264,235.5 265,235.7 266,235.8 267,235.9 268,236.1 269,236.2 270,236.3 271,236.5 272,236.6 273,236.7 274,236.9 275,237 276,236.5 277,235.9 278,235.9 279,235.8 280,236.4 281,236.9 282,236.6 283,236.6 284,237 285,237 286,235.7 287,235.7 288,236.3 289,236.9 290,237.3 291,236.7 292,237.1 293,237.7 294,237.7 295,236.1 296,236.1 297,236.1 298,236.1 299,236 300,236 301,237.1 302,236.4 303,236.4 304,235.8 305,236.4 306,236.3 307,236.3 308,236.6 309,237.8 310,237.2 311,236.9 312,236.2 313,235.3 314,234.6 315,237 316,237 317,236.1 318,236.1 319,235.2 320,236 321,236 322,236 323,236.7 324,237.3 325,238.6 326,238 327,238 328,238 329,237.5 330,236.9 331,238.1 332,237.3 333,238.4 334,238.4 335,239 336,237.7 337,239 338,238.3 339,238.3 340,237.7 341,237.4 342,238.4 343,237.5 344,236.9 345,236.3 346,237.5 347,236.9 348,237.5 349,236.2 350,237.7 351,237.7 352,236.8 353,236.8 354,236.8 355,236.8 356,237.4 357,237.4 358,237.4 359,237.9 360,238.5 361,238.5 362,238.5 363,239.1 364,237.8 365,237.1 366,237.1 367,237.1 368,237.5 369,236.9 370,237.5 371,239 372,238.4 373,237.6 374,236.7 375,234.1 376,234.2 377,236.3 378,235.8 379,235.8 380,235.3 381,235.4 382,236.1 383,236.2 384,236.3 385,236.9 386,236.3 387,237 388,236.4 389,236.2 390,236.8 391,236.2 392,236.7 393,236.6 394,237.3 395,237.3 396,237.3 397,236 398,236.7 399,237 400,236.4 401,237.1 402,237.8 403,237.8 404,237.8 405,237 406,236.4 407,237.1 408,236.5 409,236.8 410,237.4 411,238.1 412,236.9 413,236.9 414,236.5 415,237.8 416,236.6 417,236.6 418,237.9 419,237.9 420,237.3 421,238 422,238 423,238.1 424,237.5 425,237.5 426,237.5 427,237.6 428,237 429,237.6 430,238.6 431,238.6 432,238.6 433,237.3 434,236.9 435,236.9 436,237 437,238.5 438,238 439,237.4 440,237.4 441,238.1 442,238.1 443,238.6 444,238 445,237.1 446,237.6 447,238.3 448,237.8 449,237.9 450,238.5 451,238.6 452,238 453,237.6 454,237 455,237 456,237 457,237.7 458,237.7 459,239.1 460,239.1 461,238.5 462,239.1 463,239.1 464,238.2 465,238.2 466,238.2 467,239.1 468,237.8 469,238.4 470,237.8 471,237.8 472,237.1 473,237.8 474,238.4 475,237.7 476,237.7 477,237.7 478,239.5 479,239.5 480,239.4 481,239.4 482,238.8 483,239.1 484,238.5 485,238.5 486,238 487,237.5 488,237.5 489,238.1 490,237.5 491,237.3 492,237.5 493,239.2 494,236.8 495,237.4 496,236.8 497,237.4 498,237.2 499,238.4 500,237.8 501,238.4 502,237.8 503,237.7 504,239.7 505,238.4 506,239.7 507,239.7 508,239.2 509,237.9 510,239.2 511,238.5 512,237.1 513,236.5 514,237.1 515,236.5 516,236.4 517,235.1 518,234.5 519,235.1 520,233.2 521,233.8 522,235 523,235.6 523.9,236.7 524.9,237.4 525.8,238.1 526.7,240.1 527.7,240.7 528.7,240 529.8,238.6 530.8,239.9 531.8,239.9 532.8,238.1 533.9,239.2 534.9,239.8 535.9,239.3 536.9,239.3 538,239.9 539,237.8 540,238.1 541,234.8 542,230.8 543,229.9 544,230.7 545,230.8 546,231 547,231.7 548,230.8 549,233.1 550,233.5 551,234.9 552,235.3 553,235 554,235 555,235.5 556,234.4 557,235 558,234.4 559,235 560,235.2 561,235.1 562,236 563,235.9 564,234.9 565,234.8 566,234.7 567,234.6 568,235.1 569,233.8 570,235.2 571,235.1 572,235 573,235.5 574,233.9 575,233.9 575.9,233.8 576.9,233.8 577.9,234.2 578.9,234.6 579.9,234.1 580.8,234 581.8,234 582.8,234.6 583.8,232.6 584.7,232.5 585.7,234 586.7,232.4 587.7,232.9 588.7,233.1 589.8,233 590.8,232.9 591.8,233.4 592.8,232.7 593.8,232.2 594.9,232.1 595.9,232 596.9,231.2 597.9,232.2 598.9,232.1 599.9,232.6 601,231.9 602,230.9 603,231.5 604,232.2 605,230.3 606,231 607,230.4 608,231.1 609,231.2 610,231.3 611,230.7 612,232.9 613,232.4 614,232.4 615,231.9 615.9,231.1 616.7,229.7 617.7,229.8 618.7,229.2 619.7,229.9 620.7,229.5 621.7,229.6 622.7,231.1 623.7,232.6 624.7,234.1 625.7,235.6 626.7,237.1 627.7,237.9 628.7,237 629.7,236.3 630.7,236.1 631.7,235.8 632.7,236.4 633.7,236.2 634.7,235.3 635.7,235.7 636.7,234.8 637.7,235.4 638.7,234.8 639.7,234.9 640.7,234.2 641.7,234.8 642.7,236.3 643.7,235.1 644.7,235.7 645.7,235.6 646.7,235 647.7,234 648.7,234 649.7,234.6 650.7,234.6 651.7,234.6 652.7,235.4 653.7,234.9 654.7,234.5 655.7,234.4 656.7,234.4 657.7,233.5 658.7,233.4 659.7,234 660.7,234.3 661.7,234.9 662.7,235.1 663.7,235.1 664.7,234 665.7,233 666.7,233.7 667.7,233.6 668.7,233.6 669.7,233.6 670.7,233.5 671.7,234.9 672.7,234.8 673.7,234.8 674.7,234.8 675.7,235.4 676.7,233.4 677.7,233.4 678.7,232.9 679.7,234.2 680.7,233.5 681.8,234.2 682.8,234.3 683.8,234.3 684.8,234 685.8,234 686.8,233.5 687.8,234.2 688.8,235.2 689.9,235.2 690.9,234.4 691.9,234.5 692.9,235.2 693.9,234.2 694.9,235.4 695.9,234.2 696.9,234.3 697.9,235.4 699,235.5 700,235.6 701,235.8 702,235.9 703,234.9 704,235 705,235.1 706,234.6 706.9,237.3 707.9,235.5 708.9,235.6 709.9,235.1 710.9,235.8 711.9,235.9 712.8,236.1 713.8,236.4 714.8,237.8 715.8,237.3 716.8,238.1 717.8,237.4 718.7,238.1 719.7,238.2 720.7,238.3 721.7,237.8 723,235.9 724,235.4 725,236.1 726,236.2 727,236.2 728,236.3 729,236.4 730,235.1 731,235.2 732,235.2 733,235.9 734,235.6 735,236.3 736,236.4 737,236.5 738,235.9 739,236.6 740,236.7 741.3,245 742.3,242.9 743.2,240.8 744.2,239.6 745.2,238.4 746.2,237.8 747.1,237.1 748.1,236.8 749.1,236.4 750.1,236.2 751,236 752,235.9 753,235.8 754,244.6 755,253.3 756,249.3 757,245.3 757.9,243.1 758.9,240.9 759.9,239.7 760.9,238.5 761.8,237.8 762.8,237.1 763.8,236.8 764.8,236.4 765.7,236.2 766.7,236 767.7,253.3 768.5,249.4 769.3,245.5 770.2,243.3 771,241.1 771.8,239.9 772.6,238.7 773.4,238.1 774.2,237.4 775,237.1 775.9,236.7 776.7,236.5 777.5,236.3 778.4,242.8 779.2,249.2 780.1,246.2 781,243.2 781.9,241.6 782.8,240 783.7,239.1 784.6,238.2 785.5,237.7 786.4,237.2 787.3,236.9 788.2,236.6 789.1,236.5 790,236.3 790.8,253 791.6,249.1 792.3,245.3 793.1,243.2 793.9,241 794.6,239.9 795.4,238.7 796.2,238.1 796.9,237.4 797.7,237 798.5,236.7 799.2,236.5 800,236.3 800.9,242.8 801.7,249.2 802.9,242.3 804,238.5 805.2,236.4 806.3,235.2 807.5,234.6 808.6,234.2 809.2,233.8 810.2,237.8 811.3,241.7 812.4,239.4 813.5,238.2 814.6,237.5 815.8,237.1 816.9,236.9 818,236.8 819.1,236.8 820.1,236.8 821.2,236.7 822.2,236.7 823.3,236.7 824.3,239.6 825.3,242.5 826.3,241.6 827.2,242.9 828.2,244 829.1,243.4 830.1,243.4 831.1,244 832,243.4 833,241.4 834,242.9 835,242.4 836,244.1 837,243.3 838,244.2 839,244.4 840,244.6 841,244.6 842,244.6 843,244.6 844,244.6 845,243.9 846,243.3 847,244.6 848,244.6 849,244 850,244.2 851,244 852,242 853,240.8 854,240.6 855,240.5 856,242 857,243.2 858,243.8 859,243.8 860,244.6 861,243.9 862,243.2 863,243.1 864,242.3 865.1,242.5 866.1,242.3 867.1,242.1 868.1,242.1 869.2,241.3 870.2,241.1 871.2,240.5 872.3,240.2 873.3,239.9 874.3,240 875.4,240.8 876.4,241 877.4,241.7 878.5,240.6 879.5,241.9 880.5,242 881.5,242.4 882.6,241.3 883.6,242 884.6,241.6 885.7,242.8 886.7,242.9 887.5,243.4 888.3,245.3 889.4,243.6 890.6,241.8 891.7,241.5 892.8,241.2 893.9,243.7 895,244.6 896,244 896.9,244 897.9,243 898.9,241.7 899.8,240.7 900.8,239.4 901.8,240.7 902.8,241.3 903.8,241.3 904.7,243.1 905.7,243.8 906.7,243.8 907.8,244.1 908.8,243.2 909.9,241.8 910.9,242.2 912,241.7 913,241.4 914,242.8 915,242.4 916,242.2 917,241.5 918,241.3 919,240.5 920,240.6 921,239.8 922,240.3 923,240.1 924,241.8 925,239.8 926,239.1 927,241.3 928,241.2 929,241 930,241.5 931.1,242.3 932.2,243.7 933.3,244 934.3,243.7 935.4,243.6 936.4,243.9 937.4,243.8 938.5,244.4 939.5,244.3 940.5,242.9 941.5,243.5 942.6,243.4 943.6,243.3 944.6,242.6 945.7,243.1 946.7,241.5 947.7,242.2 948.7,241.3 949.7,240.9 950.7,240.6 951.7,241.8 952.7,240.8 953.7,241.1 954.7,239.9 955.7,238.5 956.7,238.8 957.7,240.1 958.8,243.2 959.8,243.7 960.8,245 961.8,244.2 962.8,244.6 963.9,245.1 964.9,244.2 965.9,243.4 966.9,243.2 968,243 969,243.8 970,244.2 970.9,243.2 971.9,243.5 972.8,241.9 973.8,240.3 974.7,240.5 975.6,240.2 976.6,240.4 977.5,240.8 978.8,245.2 980,248.8 981,248 981.9,247.9 982.9,249 983.8,248.2 984.8,248.1 985.7,247.3 986.7,247.2 987.7,247.9 988.7,249.4 989.8,249.2 990.8,249.2 991.8,249.8 992.8,249.2 993.9,249.8 994.9,248.9 995.9,248.3 996.9,248.3 998,248.3 999,249.2 1000,249.2 1001,249.6 1001.9,247.5 1002.9,247.9 1003.8,247.1 1004.8,246.9 1005.7,246.1 1006.7,247.3 1007.7,246.6 1008.8,246.6 1009.8,246.7 1010.8,246.3 1011.8,247.2 1012.9,247.2 1013.9,247.9 1014.9,247.3 1015.9,247.4 1017,248.3 1018,247 1019,247.7 1019.9,245.1 1020.8,243.8 1021.7,241.2 1022.7,241.2 1023.6,241.2 1024.6,240.6 1025.6,241.2 1026.5,241.2 1027.5,241.7 1028.5,242.3 1029.4,242.3 1030.4,241.7 1031.4,241.7 1032.3,241.7 1033.3,241.1 1034.3,245.4 1035.3,248.5 1036.2,246.5 1037.1,244.3 1038,242.1 1039,241.8 1040,241.4 1041,241.5 1042,240.5 1043,241.4 1044,239.8 1045,239.2 1045.9,238.9 1046.7,240.4 1047.6,241 1048,259.2 1048.7,210 1049.8,211.5 1051,213 1052.1,217.1 1053.2,221.2 1054.4,225.2 1055.5,229.3 1056.5,231.2 1057.6,233.2 1058.7,235.1 1059.7,237 1060.8,239 1061.8,240.9 1062.8,238.4 1063.8,235.9 1064.8,233.4 1065.8,231 1066.8,228.5 1067.8,226 1068.5,230.8 1069.3,235.5 1070.4,118 1071.5,97 1072.5,96.7 1073.4,96.3 1074.4,96 1075.6,91.2 1076.7,86.4 1077.8,88.5 1078.9,90.6 1080,92.7 1081.1,97.1 1082.2,101.6 1083.3,106 1084.4,111.8 1085.5,117.7 1086.7,123.5 1087.8,129.3 1088.9,134.9 1090,140.4 1091.1,145.9 1092.2,151.5 1093.3,157.6 1094.5,163.8 1095.6,169.9 1096.7,176 1097.8,180.4 1098.9,184.9 1100,189.4 1101.1,193.8 1102.2,198.2 1103.3,202.6 1104.4,207 1105.5,210.3 1106.7,213.7 1107.8,217.1 1108.9,220.4 1109.8,222.3 1110.8,224.2 1111.7,226.1 1112.7,228.1 1113.6,230 1114.6,231.9 1115.5,233.8 1116.5,234.9 1117.5,236 1118.5,237.1 1119.5,238.2 1120.4,239.4 1121.4,240.5 1122.4,241.6 1123.4,242.7 1124.4,243.8 1125.4,244.5 1126.4,245.2 1127.4,245.9 1128.4,246.6 1129.3,247.2 1130.3,247.9 1131.3,248.6 1132.3,249.3 1133.3,250 1134.3,250.3 1135.4,250.6 1136.4,250.9 1137.4,251.2 1138.5,251.5 1139.5,251.8 1140.5,252 1141.5,252.3 1142.6,252.6 1143.6,252.9 1144.6,253.2 1145.7,253.5 1146.7,253.8 1147.7,253.9 1148.7,254.1 1149.7,254.2 1150.6,254.4 1151.6,254.5 1152.6,254.7 1153.6,254.8 1154.6,255 1155.6,255.1 1156.5,255.2 1157.5,255.4 1158.5,255.5 1159.5,255.7 1160.5,255.8 1161.5,256 1162.4,256.1 1163.4,256.3 1164.4,256.4 1165.4,256.4 1166.4,256.5 1167.5,256.5 1168.5,256.5 1169.5,256.6 1170.5,256.6 1171.5,256.7 1172.6,256.7 1173.6,256.7 1174.6,256.8 1175.6,256.8 1176.7,256.9 1177.7,256.9 1178.7,256.9 1179.7,257 1180.7,257 1181.8,257 1182.8,257.1 1183.8,257.1 1184.8,257.1 1185.8,257.2 1186.9,257.2 1187.9,257.3 1188.9,257.3 1189.9,257.3 1190.9,257.3 1191.9,257.3 1192.9,257.3 1193.9,257.3 1194.9,257.4 1195.9,257.4 1196.9,257.4 1197.9,257.4 1198.9,257.4 1199.9,257.4 1200.9,257.4 1201.9,257.4 1202.9,257.4 1203.9,257.4 1204.9,257.5 1205.9,257.5 1206.9,257.5 1207.9,257.5 1208.9,257.5 1209.9,257.5 1210.9,257.5 1211.9,257.5 1212.9,257.5 1213.9,257.5 1214.9,257.6 1215.9,257.6 1216.9,257.6 1217.9,257.6 1218.9,257.6 1219.9,257.6 1220.9,257.6 1221.9,257.6 1222.9,257.6 1223.9,257.6 1224.9,257.7 1225.9,257.7 1226.9,257.7 1227.9,257.7 1228.9,257.7 1229.9,257.7 1230.9,257.7 1231.9,257.7 1232.9,257.7 1233.9,257.7 1235,257.8 1236,257.8 1237,257.8 1238,257.8 1239,257.8 1240,257.8 1241,257.8 1242,257.8 1243,257.8 1244,257.8 1245,257.9 1246,257.9 1247,257.9 1248,257.9 1249,257.9 1250,257.9 1251,257.9 1252,257.9 1253,257.9 1254,257.9 1255,258 1256,258 1257,258 1258,258 1259,258 1260,258 1261,258 1262,258 1263,258 1264,258 1265,258.1 1266,258.1 1267,258.1 1268,258.1 1269,258.1 1270,258.1 1271,258.1 1272,258.1 1273,258.1 1274,258.1 1275,258.2 1276,258.2 1277,258.2 1278,258.2 1279,258.2 1280,258.2 1281,258.2 1282,258.2 1283,258.2 1284,258.2 1285,258.2 1286,258.2 1287,258.2 1288,258.2 1289,258.2 1290,258.2 1291,258.2 1292,258.3 1293,258.3 1294,258.3 1295,258.3 1296,258.3 1297,258.3 1298,258.3 1299,258.3 1300,258.3 1301,258.3 1302,258.3 1303,258.3 1304,258.3 1305,258.3 1306,258.3 1307,258.3 1308,258.3 1309,258.3 1310,258.3 1311,258.3 1312,258.3 1313,258.3 1314,258.3 1315,258.4 1316,258.4 1317,258.4 1318,258.4 1319,258.4 1320,258.4 1321,258.4 1322,258.4 1323,258.4 1324,258.4 1325,258.4 1326,258.4 1327,258.4 1328,258.4 1329,258.4 1330,258.4 1331,258.4 1332,258.4 1333,258.4 1334,258.4 1335,258.4 1336,258.4 1337,258.5 1338,258.5 1339,258.5 1340,258.5 1341,258.1 1342,259 1343,259.3 1344,259 1345,259 1346,258 1347,258.3 1348,258 1349,258 1350,258 1351,258 1352,258 1353,258 1354,258.5 1355,258.5 1356,258.5 1357,258.5 1358,258.5 1359,258.2 1360,258.6 1361,258.6 1362,258.8 1363,258.8 1364,258.8 1365,258.5 1366,258.8 1367,258.8 1368,258.4 1369,258.3 1370,258.3 1371,258.6 1372,255.5 1373,255.5 1374,255.5 1375,255.5 1376,255.5 1377,255.5 1378,255.5 1379,255.5 1380,255.5 1381,255.5 1382,255.5 1383,255.5 1384,255.5 1385,255.5 1386,256.5 1387,256.5 1388,256.5 1389,256.5 1390,256.5 1391,256.5 1392,256.5 1393,256.5 1394,256.5 1395,256.5 1396,256.5 1397,256.5 1398,256.5 1399,256.5 1400,256.5 1401,256.5 1402,256.5 1403,256.5 1404,256.5 1405,256.5 1406,256.5 1407,256.5 1408,256.5 1409,256.5 1410,256.5 1411,256.5 1412,256.5 1413,256.5 1414,256.5 1415,256.5 1416,256.5 1417,256.5 1418,256.5 1419,256.5 1420,256.5 1421,256.5 1422,256.5 1423,256.5 1424,256.5 1425,256.5 1426,256.5 1427,256.6 1428,256.6 1429,256.6 1430,256.6 1431,256.6 1432,256.6 1433,256.7 1434,256.7 1435,256.7 1436,256.7 1437,256.7 1438,256.7 1439,256.7 1440,256.8 1441,256.8 1442,256.8 1443,256.8 1444,256.8 1445,256.8 1446,256.9 1447,256.9 1448,256.9 1449,256.9 1450,256.9 1451,256.9 1452,256.9 1453,257 1454,257 1455,257 1456,257 1457,257 1458,257 1459,257.1 1460,257.1 1461,257.1 1462,257.1 1463,257.1 1464,257.1 1465,257.1 1466,257.2 1467,257.2 1468,257.2 1469,257.2 1470,257.2 1471,257.2 1472,257.3 1473,257.3 1474,257.3 1475,257.3 1476,257.3 1477,257.3 1478,257.4 1479,257.4 1480,257.4 1481,257.4 1482,257.4 1483,257.4 1484,257.4 1485,257.5 1486,257.5 1487,257.5 1488,257.5 1489,257.5 1490,257.5 1491,257.6 1492,257.6 1493,257.6 1494,257.6 1495,257.6 1496,257.6 1497,257.6 1498,257.7 1499,257.7 1500,257.7 1501,257.7 1502,257.7 1503,257.7 1504,257.8 1505,257.8 1506,257.8 1507,257.8 1508,257.8 1509,257.8 1510,257.8 1511,257.9 1512,257.9 1513,257.9 1514,257.9 1515,257.9 1516,257.9 1517,258 1518,258 1519,258 1520,258 1521.4,261.4 1522.3,261 1523.2,260.7 1524.1,260.4 1525,260 1526,260 1527,260 1528,260 1529,260 1530,260 1531,260 1532,260 1533,260 1534,260 1535,260 1536,260 1537,260.1 1538,260.1 1539,260.1 1540,260.1 1541,260.1 1542,260.1 1543,260.1 1544,260.1 1545,260.1 1546,260.1 1547,260.1 1547.9,260.1 1548.9,260.1 1549.9,260.1 1550.9,260.1 1551.9,260.1 1552.9,260.1 1553.9,260.1 1554.9,260.1 1555.9,260.1 1556.9,260.1 1557.9,260.1 1558.9,260.2 1559.9,260.2 1560.9,260.2 1561.9,260.2 1562.9,260.2 1563.9,260.2 1564.9,260.2 1565.9,260.2 1566.9,260.2 1567.9,260.2 1568.9,260.2 1569.9,260.2 1570.9,260.2 1571.9,260.2 1572.9,260.2 1573.9,260.2 1574.9,260.2 1575.9,260.2 1576.9,260.2 1577.9,260.2 1578.9,260.2 1579.9,260.2 1580.9,260.2 1581.9,260.3 1582.9,260.3 1583.9,260.3 1584.9,260.3 1585.9,260.3 1586.9,260.3 1587.9,260.3 1588.9,260.3 1589.9,260.3 1590.9,260.3 1591.9,260.3 1592.8,260.3 1593.8,260.3 1594.8,260.3 1595.8,260.3 1596.8,260.3 1597.8,260.3 1598.8,260.3 1599.8,260.3 1600.8,260.3 1601.8,260.3 1602.8,260.3 1603.8,260.3 1604.8,260.4 1605.8,260.4 1606.8,260.4 1607.8,260.4 1608.8,260.4 1609.8,260.4 1610.8,260.4 1611.8,260.4 1612.8,260.4 1613.8,260.4 1614.8,260.4 1615.8,260.4 1616.8,260.4 1617.8,260.4 1618.8,260.4 1619.8,260.4 1620.8,260.4 1621.8,260.4 1622.8,260.4 1623.8,260.4 1624.8,260.4 1625.8,260.4 1626.8,260.5 1627.8,260.5 1628.8,260.5 1629.8,260.5 1630.8,260.5 1631.8,260.5 1632.8,260.5 1633.8,260.5 1634.8,260.5 1635.8,260.5 1636.8,260.5 1637.8,260.5 1638.7,260.5 1639.7,260.5 1640.7,260.5 1641.7,260.5 1642.7,260.5 1643.7,260.5 1644.7,260.5 1645.7,260.5 1646.7,260.5 1647.7,260.5 1648.7,260.5 1649.7,260.6 1650.7,260.6 1651.7,260.6 1652.7,260.6 1653.7,260.6 1654.7,260.6 1655.7,260.6 1656.7,260.6 1657.7,260.6 1658.7,260.6 1659.7,260.6 1660.7,260.6 1661.7,260.6 1662.7,260.6 1663.7,260.6 1664.7,260.6 1665.7,260.6 1666.7,260.6 1667.7,260.6 1668.7,260.6 1669.7,260.6 1670.7,260.6 1671.7,260.7 1672.7,260.7 1673.7,260.7 1674.7,260.7 1675.7,260.7 1676.7,260.7 1677.7,260.7 1678.7,260.7 1679.7,260.7 1680.7,260.7 1681.7,260.7 1682.7,260.7 1683.6,260.7 1684.6,260.7 1685.6,260.7 1686.6,260.7 1687.6,260.7 1688.6,260.7 1689.6,260.7 1690.6,260.7 1691.6,260.7 1692.6,260.7 1693.6,260.7 1694.6,260.8 1695.6,260.8 1696.6,260.8 1697.6,260.8 1698.6,260.8 1699.6,260.8 1700.6,260.8 1701.6,261.1 1702.6,261.5 1703.6,260.9 1704.6,261.5 1705.6,261.2 1706.6,261.2 1707.6,261.2 1708.6,260.9 1709.6,261.2 1710.6,261.2 1711.6,261.5 1712.6,260.8 1713.6,260.8 1714.6,261.1 1715.6,260.6 1716.6,260.8 1717.6,260.9 1718.6,260.9 1719.6,260.9 1720.6,260.6 1721.6,260.6 1722.6,260.5 1723.6,260.2 1724.6,260.5 1725.6,260.5 1726.6,261.3 1727.6,261.3 1728.5,261.3 1729.5,261.4 1730.5,260.9 1731.5,260.9 1732.5,260.9 1733.5,260.9 1734.5,260.9 1735.5,260.9 1736.5,260.9 1737.5,260.9 1738.5,260.9 1739.5,261 1740.5,261 1741.5,261 1742.5,261 1743.5,261 1744.5,261 1745.5,261 1746.5,261 1747.5,261 1748.5,261 1749.5,261 1750.5,261" fill="none" stroke="#fff21c" stroke-width="1.25" stroke-linejoin="round" shape-rendering="crispEdges"/>
<path d="M1710 64.7H1741.5Q1744.3 64.7 1744.3 67.5V99Z" fill="#505050"/>
<circle cx="1737" cy="71.5" r="3.7" fill="none" stroke="#a9a9a9" stroke-width="1.3"/>
<path d="M1734.2 74.3L1727.8 80.7" stroke="#a9a9a9" stroke-width="2.2" stroke-linecap="round"/>
<path d="M45 58H65L55 67.7Z" fill="#f28f22"/>
<path d="M46 69H64V88H59L55 94.2L51 88H46Z" fill="#000" stroke="#f28f22" stroke-width="2" stroke-linejoin="miter"/>
<text x="55.3" y="84" fill="#f28f22" text-anchor="middle" style="font:bold 15px 'DejaVu Sans','Liberation Sans',sans-serif">T</text>
<path d="M9 161.5H76.5L83.2 174.5L76.5 187.5H9Q6.7 187.5 6.7 185V164Q6.7 161.5 9 161.5Z" fill="#1d1b08" stroke="#f6ea2c" stroke-width="1.5"/>
<path d="M32.7 161.5V187.5" stroke="#f6ea2c" stroke-width="1.5"/>
<text x="19.3" y="178" fill="#f6ea2c" text-anchor="middle">C 1</text>
<text x="57.5" y="178" fill="#f6ea2c" text-anchor="middle">20 V</text>
<text x="101.5" y="179.2" fill="#f6ea2c" style="font-size:18px;letter-spacing:.12px">U_loop,coil</text>
<path d="M9 395.5H76.5L83.2 408.5L76.5 421.5H9Q6.7 421.5 6.7 419V398Q6.7 395.5 9 395.5Z" fill="#151c08" stroke="#8cc72e" stroke-width="1.5"/>
<path d="M32.7 395.5V421.5" stroke="#8cc72e" stroke-width="1.5"/>
<text x="19.3" y="412" fill="#8cc72e" text-anchor="middle">C 4</text>
<text x="57.8" y="412" fill="#8cc72e" text-anchor="middle" textLength="41.5" lengthAdjust="spacingAndGlyphs">200 mV</text>
<text x="101.5" y="413" fill="#8cc72e" style="font-size:18px;letter-spacing:.25px">U_Photod</text>
<path d="M9 722.5H29.5L41.5 735L29.5 747.5H9Q6.5 747.5 6.5 745V725Q6.5 722.5 9 722.5Z" fill="#1c1209" stroke="#f28f22" stroke-width="1.3"/>
<text x="23.3" y="738.7" fill="#f28f22" text-anchor="middle">M 1</text>
<text x="53.5" y="740" fill="#e58a26" style="font-size:18px">B_t</text>
<path d="M9 952H29.5L42 965L29.5 978H9Q6 978 6 975V955Q6 952 9 952Z" fill="#6f2c8d"/>
<text x="23.6" y="968.7" fill="#fff" text-anchor="middle">M 2</text>
<text x="54" y="969.5" fill="#8434a0" style="font-size:18px">I_p</text>
</svg>
<div class="abs sdiv" style="top:290px"></div>
<div class="abs sdiv" style="top:524px"></div>
<div class="abs sdiv" style="top:758px"></div>
<div class="abs" style="left:1760px;top:501.6px;width:4.2px;height:4.2px;border-radius:50%;background:#c9c9c9"></div>
<div class="abs" style="left:1760px;top:510.1px;width:4.2px;height:4.2px;border-radius:50%;background:#c9c9c9"></div>
<div class="abs" style="left:1760px;top:518.7px;width:4.2px;height:4.2px;border-radius:50%;background:#c9c9c9"></div>
<div id="rp" class="abs"><h3>Add New...</h3>
<div class="btn" style="left:8px;top:24.4px;letter-spacing:-0.25px">Cursors</div>
<div class="btn" style="left:80px;top:24.4px;letter-spacing:0.25px">Callout</div>
<div class="btn" style="left:8px;top:70.4px;letter-spacing:0.05px">Measure</div>
<div class="btn" style="left:80px;top:70.4px;letter-spacing:-0.17px">Search</div>
<div class="btn two" style="left:8px;top:116.3px;letter-spacing:-0.22px">Results<br><span style='letter-spacing:.2px'>Table</span></div>
<div class="btn" style="left:80px;top:116.3px;letter-spacing:0.75px">Plot</div>
<div class="hr" style="left:3.3px;top:159.3px;width:144px"></div>
<div class="btn" style="left:8px;top:166.4px"><svg width="61" height="35" viewBox="1779 197.4 61 35"><rect x="1798" y="203" width="22" height="19" fill="none" stroke="#b4b4b4" stroke-width="1.6" stroke-dasharray="3.2 2.4"/><circle cx="1811" cy="210.5" r="4.3" fill="none" stroke="#b4b4b4" stroke-width="1.6"/><path d="M1807.8 213.8L1802.8 218" stroke="#b4b4b4" stroke-width="2.4" stroke-linecap="round"/><path d="M1815.3 217.2L1823.2 221.6L1820 222.3L1821.6 225.8L1820.2 226.4L1818.6 223L1816.2 225Z" fill="#b4b4b4"/></svg></div>
<div class="btn" style="left:80px;top:166.4px;letter-spacing:0.36px">More...</div>
<div class="hr" style="left:3.3px;top:211.4px;width:144px"></div>
</div>
<div class="badge" style="left:3px"><div class="h" style="background:#494622;color:#f6ee35">Ch 1</div><div class="b" style="height:57px"><div>5 V/div</div><div>1 MΩ</div><div>200 kHz</div></div><span class="bw">B<sub>w</sub></span></div>
<div class="badge off" style="left:98px"><div class="h" style="background:#27807f;color:#161616">Ch 2</div><div class="b" style="height:57px"><div>250 mV/div</div><div>1 MΩ</div><div>200 kHz</div></div><span class="bw">B<sub>w</sub></span></div>
<div class="badge off" style="left:193px"><div class="h" style="background:#903849;color:#b9aeb0">Ch 3</div><div class="b" style="height:57px"><div>450 mV/div</div><div>1 MΩ</div><div>200 kHz</div></div><span class="bw">B<sub>w</sub></span></div>
<div class="badge" style="left:288px"><div class="h" style="background:#394824;color:#8fd52c">Ch 4</div><div class="b" style="height:57px"><div>200 mV/div</div><div>1 MΩ</div><div>200 kHz</div></div><span class="bw">B<sub>w</sub></span></div>
<div class="badge" style="left:383px"><div class="h" style="background:#453220;color:#f7941d;letter-spacing:0.05px">Math 1</div><div class="b" style="height:57px"><div>73.8 mT/div</div><div>Intg(Ch2)…</div></div></div>
<div class="badge" style="left:478px"><div class="h" style="background:#6b2c8a;color:#fff;letter-spacing:0.05px">Math 2</div><div class="b" style="height:57px"><div>835.39 A/div</div><div>-Intg(Ch3…</div></div></div>
<div class="tall" style="left:1023px"><i style="background:#f7941d"></i><div class="n">5</div></div>
<div class="tall" style="left:1068px"><i style="background:#2a2ad6"></i><div class="n">6</div></div>
<div class="vsep" style="left:1118px"></div>
<div class="tall" style="left:1129px"><i style="background:#a3222c"></i><div class="w">Add<br>New<br>Math</div></div>
<div class="tall" style="left:1174px"><i style="background:#b9bdc9"></i><div class="w">Add<br>New<br>Ref</div></div>
<div class="tall" style="left:1219px"><i style="background:#c264f2"></i><div class="w">Add<br>New<br>Bus</div></div>
<div class="vsep" style="left:1269px"></div>
<div class="info" style="left:1280px;width:200px"><div class="h">Horizontal</div><div class="b"><span style="left:4.5px;top:.2px">4 ms/div</span><span style="left:110.5px;top:.2px">40 ms</span><span style="left:4.5px;top:19px">SR: 1 MS/s</span><span style="left:110.5px;top:19px">1 µs/pt</span><span style="left:4.5px;top:37.8px">RL: 40 kpts</span><span style="left:124.5px;top:37.8px">3%</span><svg style="position:absolute;left:110px;top:41px" width="10" height="13" viewBox="0 0 10 13"><path d="M.7 .7H9.3V8.5H6.8L5 11.8L3.2 8.5H.7Z" fill="#000" stroke="#f28f22" stroke-width="1.3"/><text x="5" y="7.6" fill="#fff" text-anchor="middle" style="font:bold 7.5px DejaVu Sans,Liberation Sans,sans-serif">T</text></svg></div></div>
<div class="info" style="left:1485px;width:160px"><div class="h">Trigger</div><div class="b"><span style="left:4px;top:1.9px;width:30px;height:15.6px;border-radius:5px;background:#2323c4;border:1.3px solid #10102e;color:#fff;text-align:center;line-height:13px;font-size:14.5px;letter-spacing:0">6</span><svg style="position:absolute;left:43px;top:3px" width="18" height="13" viewBox="0 0 18 13"><path d="M1 11.5H5.5L12 1.5H17" fill="none" stroke="#2a2a86" stroke-width="1.2"/></svg><span style="left:70px;top:.2px">3 V</span></div></div>
<div class="info" style="left:1650px;width:150px"><div class="h">Acquisition</div><div class="b"><span style="left:4.5px;top:.2px">Manual,</span><span style="left:85.5px;top:.2px">Analyze</span><span style="left:4.5px;top:19px">High Res: 16 bits</span><span style="left:4.5px;top:37.8px">Single: 0 /1</span></div></div>
<div class="vsep" style="left:1811px"></div>
<div id="prev" class="abs">Preview</div>
<div id="date" class="abs">24 Apr 2025<br>5:29:34 PM</div>
</div></body></html>
